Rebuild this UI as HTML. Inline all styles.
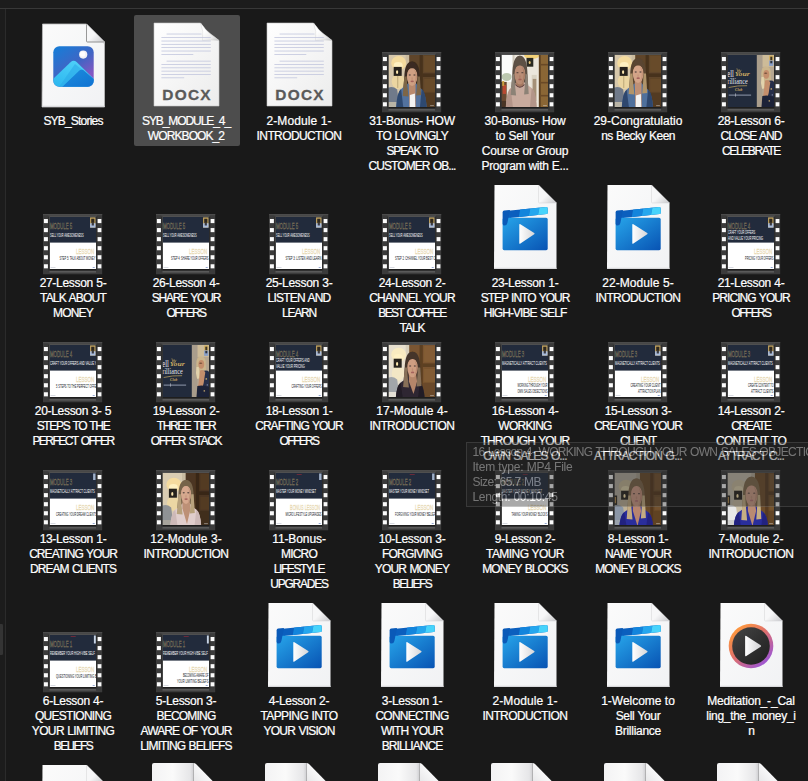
<!DOCTYPE html>
<html lang="en"><head><meta charset="utf-8"><title>Sell Your Brilliance</title>
<style>
html,body{margin:0;padding:0;background:#191919;}
body{width:808px;height:781px;overflow:hidden;position:relative;font-family:"Liberation Sans",sans-serif;}
#root{position:absolute;left:0;top:0;width:808px;height:781px;overflow:hidden;background:#191919;}
.abs{position:absolute;display:block;overflow:visible}
.lbl{position:absolute;width:140px;margin-left:-70px;text-align:center;color:#fff;font-size:12px;line-height:15px;white-space:nowrap;-webkit-text-stroke:0.22px #fff;}
.lbl span{display:block;height:15px}
.topbar{position:absolute;left:0;top:0;width:808px;height:8px;background:#1c1c1c;border-bottom:1px solid #383838}
.leftbar{position:absolute;left:0;top:9px;width:5px;height:772px;background:#1c1c1c;border-right:1px solid #2b2b2b}
.thumbv{position:absolute;left:-1px;top:623.5px;width:3.6px;height:31.5px;background:#343434;border-radius:1.2px}
.sel{position:absolute;background:#4d4d4d;border-radius:2px}
.tip{position:absolute;left:466px;top:442px;width:360px;height:63px;border:1px solid #6a6a6a;background:#2b2b2b;color:#fff;opacity:0.4;font-size:12px;line-height:15px;white-space:nowrap}
.tip span{display:block;height:15px;margin-left:5.5px;position:relative;top:1.5px}
</style></head><body><div id="root">
<svg width="0" height="0" style="position:absolute"><defs><filter id="bl" x="-5%" y="-5%" width="110%" height="110%"><feGaussianBlur stdDeviation="0.42"/></filter></defs></svg>
<div class="topbar"></div><div class="leftbar"></div><div class="thumbv"></div>
<svg class="abs" style="left:40.75px;top:22.5px" width="64.5" height="85" viewBox="-1 -1 64.5 85"><defs><linearGradient id="pg73_23a" x1="0" y1="0" x2="1" y2="1"><stop offset="0" stop-color="#fbfbfb"/><stop offset="1" stop-color="#f1f2f4"/></linearGradient><linearGradient id="pg73_23b" x1="0" y1="0" x2="1" y2="1"><stop offset="0.5" stop-color="#f7f7f8"/><stop offset="1" stop-color="#c9c9cc"/></linearGradient></defs><path d="M0.5 0H44.5L62.5 18V83H0Z" fill="url(#pg73_23a)" stroke="#bdbdbd" stroke-width="0.8"/><path d="M0 82.4H62.5" stroke="#d9d9dc" stroke-width="1.2"/><path d="M44.5 0L62.5 18H45.5Q44.5 18 44.5 17Z" fill="url(#pg73_23b)" stroke="#d2d2d4" stroke-width="0.5"/></svg><svg class="abs" style="left:41.75px;top:23.5px" width="63" height="20" viewBox="0 0 63 20"><path d="M44.5 0.4V17Q44.5 18 45.5 18H62.3" fill="none" stroke="#8f8f8f" stroke-width="0.9"/><path d="M62.2 18V20" stroke="#bdbdbd" stroke-width="0.8"/></svg><svg class="abs" style="left:52.6px;top:45.5px" width="41" height="41" viewBox="0 0 41 41"><defs><linearGradient id="pha" x1="0.2" y1="0" x2="0.9" y2="1"><stop offset="0" stop-color="#1a7bd6"/><stop offset="0.45" stop-color="#4065c4"/><stop offset="0.8" stop-color="#8457c2"/></linearGradient>
<linearGradient id="phb" x1="0" y1="1" x2="0.6" y2="0"><stop offset="0" stop-color="#28b4ee"/><stop offset="1" stop-color="#4fd0f8"/></linearGradient>
<linearGradient id="phc" x1="0" y1="0" x2="1" y2="1"><stop offset="0" stop-color="#1d8fdf"/><stop offset="1" stop-color="#0f6fd0"/></linearGradient>
<clipPath id="phk"><rect x="0.3" y="0.3" width="40.4" height="40.4" rx="6"/></clipPath></defs><g clip-path="url(#phk)"><rect width="41" height="41" fill="url(#pha)"/><path d="M-1 34L17.5 16.2Q20.5 13.6 23.6 16L44 36V43H-1Z" fill="url(#phb)"/><path d="M9 41L26.5 24.2Q28.6 22.6 30.6 24.2L44 36V43H7Z" fill="url(#phc)"/><path d="M9 41L26.5 24.2Q27.5 23.4 28.6 23.3L22 18 6 41Z" fill="#2aa7e8" opacity="0.55"/></g><circle cx="30.2" cy="8.6" r="4.1" fill="#f2f2f4"/><circle cx="29.6" cy="8" r="2.6" fill="#ffffff"/></svg><div class="lbl" style="left:73px;top:113.5px"><span style="letter-spacing:-0.8px">SYB_Stories</span></div>
<div class="sel" style="left:134px;top:15px;width:105.5px;height:131px"></div><svg class="abs" style="left:152.8px;top:22px" width="67" height="86" viewBox="-1 -1 67 86"><defs><linearGradient id="dx186a" x1="0" y1="0" x2="1" y2="1"><stop offset="0" stop-color="#ffffff"/><stop offset="1" stop-color="#ececec"/></linearGradient><linearGradient id="dx186b" x1="0" y1="0" x2="1" y2="1"><stop offset="0.35" stop-color="#ffffff"/><stop offset="0.75" stop-color="#e9e9e9"/><stop offset="1" stop-color="#bcbcbc"/></linearGradient></defs><path d="M0 0H46.5Q50 6 56 10.5 61 14 65 17.5V83H0Z" fill="url(#dx186a)" stroke="#c8c8c8" stroke-width="0.6"/><path d="M46.5 0Q50 4 52 7 56 11.5 65 17.5 58 16.5 48.5 17.5 50 8 46.5 0Z" fill="url(#dx186b)" stroke="#cfcfcf" stroke-width="0.4"/><rect x="12.6" y="10.65" width="34.9" height="0.75" fill="#bfc3dc"/><rect x="7.4" y="14.15" width="49.4" height="0.75" fill="#bfc3dc"/><rect x="7.4" y="17.65" width="49.4" height="0.75" fill="#bfc3dc"/><rect x="7.4" y="20.95" width="49.4" height="0.75" fill="#bfc3dc"/><rect x="7.4" y="24.25" width="49.4" height="0.75" fill="#bfc3dc"/><rect x="7.4" y="27.65" width="49.4" height="0.75" fill="#bfc3dc"/><rect x="7.4" y="31.05" width="31.9" height="0.75" fill="#bfc3dc"/><rect x="12.6" y="37.75" width="44.2" height="0.75" fill="#bfc3dc"/><rect x="7.4" y="41.05" width="49.4" height="0.75" fill="#bfc3dc"/><rect x="7.4" y="44.45" width="49.4" height="0.75" fill="#bfc3dc"/><rect x="7.4" y="47.75" width="49.4" height="0.75" fill="#bfc3dc"/><rect x="7.4" y="51.05" width="49.4" height="0.75" fill="#bfc3dc"/><rect x="7.4" y="54.45" width="22.8" height="0.75" fill="#bfc3dc"/><text x="33.1" y="76.7" text-anchor="middle" font-family="'Liberation Sans',sans-serif" font-weight="bold" font-size="15.4" letter-spacing="1.3" fill="#5a5a5a" stroke="#5a5a5a" stroke-width="0.3">DOCX</text></svg><div class="lbl" style="left:186px;top:113.5px"><span style="letter-spacing:-1.08px">SYB_MODULE_4_</span><span style="letter-spacing:-0.91px">WORKBOOK_2</span></div>
<svg class="abs" style="left:265.8px;top:22px" width="67" height="86" viewBox="-1 -1 67 86"><defs><linearGradient id="dx299a" x1="0" y1="0" x2="1" y2="1"><stop offset="0" stop-color="#ffffff"/><stop offset="1" stop-color="#ececec"/></linearGradient><linearGradient id="dx299b" x1="0" y1="0" x2="1" y2="1"><stop offset="0.35" stop-color="#ffffff"/><stop offset="0.75" stop-color="#e9e9e9"/><stop offset="1" stop-color="#bcbcbc"/></linearGradient></defs><path d="M0 0H46.5Q50 6 56 10.5 61 14 65 17.5V83H0Z" fill="url(#dx299a)" stroke="#c8c8c8" stroke-width="0.6"/><path d="M46.5 0Q50 4 52 7 56 11.5 65 17.5 58 16.5 48.5 17.5 50 8 46.5 0Z" fill="url(#dx299b)" stroke="#cfcfcf" stroke-width="0.4"/><rect x="12.6" y="10.65" width="34.9" height="0.75" fill="#bfc3dc"/><rect x="7.4" y="14.15" width="49.4" height="0.75" fill="#bfc3dc"/><rect x="7.4" y="17.65" width="49.4" height="0.75" fill="#bfc3dc"/><rect x="7.4" y="20.95" width="49.4" height="0.75" fill="#bfc3dc"/><rect x="7.4" y="24.25" width="49.4" height="0.75" fill="#bfc3dc"/><rect x="7.4" y="27.65" width="49.4" height="0.75" fill="#bfc3dc"/><rect x="7.4" y="31.05" width="31.9" height="0.75" fill="#bfc3dc"/><rect x="12.6" y="37.75" width="44.2" height="0.75" fill="#bfc3dc"/><rect x="7.4" y="41.05" width="49.4" height="0.75" fill="#bfc3dc"/><rect x="7.4" y="44.45" width="49.4" height="0.75" fill="#bfc3dc"/><rect x="7.4" y="47.75" width="49.4" height="0.75" fill="#bfc3dc"/><rect x="7.4" y="51.05" width="49.4" height="0.75" fill="#bfc3dc"/><rect x="7.4" y="54.45" width="22.8" height="0.75" fill="#bfc3dc"/><text x="33.1" y="76.7" text-anchor="middle" font-family="'Liberation Sans',sans-serif" font-weight="bold" font-size="15.4" letter-spacing="1.3" fill="#5a5a5a" stroke="#5a5a5a" stroke-width="0.3">DOCX</text></svg><div class="lbl" style="left:299px;top:113.5px"><span style="letter-spacing:0.11px;word-spacing:-0.11px">2-Module 1-</span><span style="letter-spacing:-0.6px">INTRODUCTION</span></div>
<svg class="abs" style="left:382px;top:52px" width="60" height="61" viewBox="0 0 60 61"><rect x="0" y="0" width="59.2" height="60.3" fill="#3b3b3b"/><rect x="0" y="0" width="59.2" height="1.2" fill="#4b4b4b"/><rect x="5.5" y="1.6" width="48.5" height="1.2" fill="#555"/><rect x="6.5" y="57" width="46.5" height="1.6" fill="#5a5a5a"/><rect x="5.2" y="2.5" width="1.3" height="54" fill="#2c2c2c"/><rect x="53" y="2.5" width="1.3" height="54" fill="#2c2c2c"/><rect x="0.9" y="5" width="4" height="4.1" fill="#fbfbfb"/><rect x="54.6" y="5" width="3.8" height="4.1" fill="#fbfbfb"/><rect x="0.9" y="14.05" width="4" height="4.1" fill="#fbfbfb"/><rect x="54.6" y="14.05" width="3.8" height="4.1" fill="#fbfbfb"/><rect x="0.9" y="23.1" width="4" height="4.1" fill="#fbfbfb"/><rect x="54.6" y="23.1" width="3.8" height="4.1" fill="#fbfbfb"/><rect x="0.9" y="32.15" width="4" height="4.1" fill="#fbfbfb"/><rect x="54.6" y="32.15" width="3.8" height="4.1" fill="#fbfbfb"/><rect x="0.9" y="41.2" width="4" height="4.1" fill="#fbfbfb"/><rect x="54.6" y="41.2" width="3.8" height="4.1" fill="#fbfbfb"/><rect x="0.9" y="50.25" width="4" height="4.1" fill="#fbfbfb"/><rect x="54.6" y="50.25" width="3.8" height="4.1" fill="#fbfbfb"/><svg x="6.7" y="2.9" width="46.3" height="52.2" viewBox="0 0 46.3 52.2" preserveAspectRatio="none"><g filter="url(#bl)"><rect x="-3" y="-3" width="52" height="58" fill="#5e4429"/><rect x="30.9" y="-3" width="3.2" height="58" fill="#47321d"/><rect x="33.9" y="18.5" width="20" height="3.6" fill="#47321d"/><rect x="35.4" y="1" width="12" height="16" fill="#71532f" opacity="0.55"/><rect x="35.4" y="24" width="12" height="13" fill="#71532f" opacity="0.5"/><rect x="34.4" y="38" width="14" height="16" fill="#47321d" opacity="0.5"/><rect x="-3" y="-3" width="23.4" height="58" fill="#d6c7ab"/><rect x="17.0" y="-3" width="3.4" height="40" fill="#cbbb9e"/><ellipse cx="10" cy="8.100000000000001" rx="7.5" ry="7" fill="#f7dd9c" opacity="0.9"/><ellipse cx="9.5" cy="10.600000000000001" rx="4.5" ry="3.4" fill="#fff2c4" opacity="0.9"/><ellipse cx="9.5" cy="26.6" rx="6.5" ry="7.5" fill="#f7dd9c" opacity="0.63"/><rect x="5" y="12.000000000000002" width="8" height="9" fill="#27231e"/><ellipse cx="8.4" cy="17.200000000000003" rx="1.1" ry="1.9" fill="#ffe9b0"/><rect x="8.7" y="21.0" width="0.8" height="12" fill="#9a8458" opacity="0.7"/><path d="M-3 34Q3 30 8.5 34.5L11 55H-3Z" fill="#6f7a8a"/><path d="M-3 47H9L10 55H-3Z" fill="#b9b4a6"/><path d="M15.6 22.6Q15.9 6.6 23.4 6.6Q30.9 6.6 31.2 22.6L32.4 41Q23.4 44 14 41Z" fill="#3b2c20"/><path d="M7.4 55Q8 35 15.4 32L20.4 27.5 26.9 27.5 30 32Q37.4 35 38 55Z" fill="#52729e"/><path d="M7.4 55Q8 37 12.4 34L14.9 55Z" fill="#2f4870"/><path d="M38 55Q37.4 37 33 34L31 55Z" fill="#2f4870"/><path d="M20 28.2H26.8L27 55H20.8Z" fill="#b98a6e"/><path d="M21.2 40L26.2 38.5 26.6 55H21Z" fill="#f3f3f3"/><path d="M15.6 21.6L14 41 19.8 41.6 18.4 29.2 18 21.6Z" fill="#7d6546"/><path d="M31.2 21.6L32.4 40 27.4 40.6 28.4 29.2 28.8 21.6Z" fill="#7d6546"/><ellipse cx="23.4" cy="21.6" rx="5.2" ry="9.6" fill="#cfa083"/><path d="M25.22 13.92Q28.86 21.6 24.96 30.72Q31.72 21.6 25.22 13.92Z" fill="#b98a6e" opacity="0.8"/><path d="M17.6 19.2Q17.8 6.6 23.4 6.6Q29 6.6 29.2 19.2Q27.04 12.96 23.4 13.34Q19.76 12.96 17.6 19.2Z" fill="#3b2c20"/><ellipse cx="21.06" cy="20.06" rx="1.1" ry="0.7" fill="#3e3230" opacity="0.75"/><ellipse cx="25.74" cy="20.06" rx="1.1" ry="0.7" fill="#3e3230" opacity="0.75"/><ellipse cx="23.5" cy="26.4" rx="1.7" ry="0.9" fill="#9a5452" opacity="0.8"/><ellipse cx="23.4" cy="23.71" rx="0.7" ry="1.6" fill="#b98a6e" opacity="0.6"/></g><rect x="41.4" y="50.4" width="3.8" height="0.8" fill="#e0e0e0" opacity="0.6"/></svg><rect x="6.7" y="55.1" width="46.3" height="1.2" fill="#1c1c1c"/></svg><div class="lbl" style="left:412px;top:113.5px"><span style="letter-spacing:-0.2px;word-spacing:0.2px">31-Bonus- HOW</span><span style="letter-spacing:-0.69px;word-spacing:0.69px">TO LOVINGLY</span><span style="letter-spacing:-1.26px;word-spacing:1.26px">SPEAK TO</span><span style="letter-spacing:-0.94px;word-spacing:0.94px">CUSTOMER OB...</span></div>
<svg class="abs" style="left:495px;top:52px" width="60" height="61" viewBox="0 0 60 61"><rect x="0" y="0" width="59.2" height="60.3" fill="#3b3b3b"/><rect x="0" y="0" width="59.2" height="1.2" fill="#4b4b4b"/><rect x="5.5" y="1.6" width="48.5" height="1.2" fill="#555"/><rect x="6.5" y="57" width="46.5" height="1.6" fill="#5a5a5a"/><rect x="5.2" y="2.5" width="1.3" height="54" fill="#2c2c2c"/><rect x="53" y="2.5" width="1.3" height="54" fill="#2c2c2c"/><rect x="0.9" y="5" width="4" height="4.1" fill="#fbfbfb"/><rect x="54.6" y="5" width="3.8" height="4.1" fill="#fbfbfb"/><rect x="0.9" y="14.05" width="4" height="4.1" fill="#fbfbfb"/><rect x="54.6" y="14.05" width="3.8" height="4.1" fill="#fbfbfb"/><rect x="0.9" y="23.1" width="4" height="4.1" fill="#fbfbfb"/><rect x="54.6" y="23.1" width="3.8" height="4.1" fill="#fbfbfb"/><rect x="0.9" y="32.15" width="4" height="4.1" fill="#fbfbfb"/><rect x="54.6" y="32.15" width="3.8" height="4.1" fill="#fbfbfb"/><rect x="0.9" y="41.2" width="4" height="4.1" fill="#fbfbfb"/><rect x="54.6" y="41.2" width="3.8" height="4.1" fill="#fbfbfb"/><rect x="0.9" y="50.25" width="4" height="4.1" fill="#fbfbfb"/><rect x="54.6" y="50.25" width="3.8" height="4.1" fill="#fbfbfb"/><svg x="6.7" y="2.9" width="46.3" height="52.2" viewBox="0 0 46.3 52.2" preserveAspectRatio="none"><g filter="url(#bl)"><rect x="-3" y="-3" width="52" height="58" fill="#ebe6dc"/><rect x="-3" y="-3" width="14.5" height="30" fill="#fbfcfb"/><rect x="10.8" y="-3" width="2" height="58" fill="#cfc8ba"/><ellipse cx="5" cy="22" rx="5" ry="4" fill="#9fb08e" opacity="0.7"/><rect x="-3" y="27" width="8" height="28" fill="#6a4a30"/><rect x="1" y="30" width="3.4" height="9" fill="#b84a32"/><rect x="0.5" y="26" width="2" height="5" fill="#c8a040"/><rect x="-3" y="46" width="9" height="9" fill="#4a3426"/><ellipse cx="30" cy="0.6" rx="7.5" ry="3.6" fill="#f2cf70" opacity="0.95"/><rect x="24.8" y="3" width="6.8" height="8.8" fill="#2c2a22"/><ellipse cx="28" cy="7.6" rx="1" ry="1.6" fill="#e8c878"/><rect x="30" y="20" width="5" height="35" fill="#d9d2c2"/><rect x="37.2" y="-3" width="12" height="58" fill="#8a6634"/><rect x="37.2" y="-3" width="1.8" height="58" fill="#5e4222"/><rect x="39" y="9" width="10" height="1.6" fill="#6a4a26"/><rect x="39" y="27" width="10" height="1.6" fill="#6a4a26"/><rect x="39" y="40" width="10" height="1.6" fill="#6a4a26"/><rect x="31" y="24" width="3.6" height="22" fill="#7a5a3a" opacity="0.55"/><path d="M10.6 20.4Q10.9 0.8 18.2 0.8Q25.5 0.8 25.8 20.4L27 40Q18.2 43 9 40Z" fill="#5d5145"/><path d="M4 55Q4.6 34 12 31L15.2 26.5 21.7 26.5 27 31Q34.4 34 35 55Z" fill="#c8ab9e"/><path d="M4 55Q4.6 36 9 33L11.5 55Z" fill="#b39589"/><path d="M35 55Q34.4 36 30 33L28 55Z" fill="#b39589"/><path d="M14.4 25.6H22V30.5Q18.2 34 14.4 30.5Z" fill="#a3775f"/><path d="M13.6 29.6Q18.2 35 22.8 29.6" stroke="#5e4040" stroke-width="1.1" fill="none"/><path d="M10.6 19.4L9 40 14.4 40.6 13 27.6 12.6 19.4Z" fill="#8c8276"/><path d="M25.8 19.4L27 39 22.4 39.6 23.4 27.6 23.8 19.4Z" fill="#8c8276"/><ellipse cx="18.2" cy="19.4" rx="5.4" ry="10.2" fill="#b98c74"/><path d="M20.09 11.24Q23.87 19.4 19.82 29.09Q26.84 19.4 20.09 11.24Z" fill="#a3775f" opacity="0.8"/><path d="M12.2 16.85Q12.4 0.8 18.2 0.8Q24 0.8 24.2 16.85Q21.98 10.22 18.2 10.63Q14.42 10.22 12.2 16.85Z" fill="#5d5145"/><ellipse cx="15.77" cy="17.77" rx="1.1" ry="0.7" fill="#3e3230" opacity="0.75"/><ellipse cx="20.63" cy="17.77" rx="1.1" ry="0.7" fill="#3e3230" opacity="0.75"/><ellipse cx="18.3" cy="24.5" rx="1.7" ry="0.9" fill="#9a5452" opacity="0.8"/><ellipse cx="18.2" cy="21.64" rx="0.7" ry="1.6" fill="#a3775f" opacity="0.6"/></g><rect x="41.4" y="50.4" width="3.8" height="0.8" fill="#e0e0e0" opacity="0.6"/></svg><rect x="6.7" y="55.1" width="46.3" height="1.2" fill="#1c1c1c"/></svg><div class="lbl" style="left:525px;top:113.5px"><span style="letter-spacing:-0.13px;word-spacing:0.13px">30-Bonus- How</span><span style="letter-spacing:-0.17px;word-spacing:0.17px">to Sell Your</span><span style="letter-spacing:-0.23px;word-spacing:0.23px">Course or Group</span><span style="letter-spacing:-0.34px;word-spacing:0.34px">Program with E...</span></div>
<svg class="abs" style="left:608px;top:52px" width="60" height="61" viewBox="0 0 60 61"><rect x="0" y="0" width="59.2" height="60.3" fill="#3b3b3b"/><rect x="0" y="0" width="59.2" height="1.2" fill="#4b4b4b"/><rect x="5.5" y="1.6" width="48.5" height="1.2" fill="#555"/><rect x="6.5" y="57" width="46.5" height="1.6" fill="#5a5a5a"/><rect x="5.2" y="2.5" width="1.3" height="54" fill="#2c2c2c"/><rect x="53" y="2.5" width="1.3" height="54" fill="#2c2c2c"/><rect x="0.9" y="5" width="4" height="4.1" fill="#fbfbfb"/><rect x="54.6" y="5" width="3.8" height="4.1" fill="#fbfbfb"/><rect x="0.9" y="14.05" width="4" height="4.1" fill="#fbfbfb"/><rect x="54.6" y="14.05" width="3.8" height="4.1" fill="#fbfbfb"/><rect x="0.9" y="23.1" width="4" height="4.1" fill="#fbfbfb"/><rect x="54.6" y="23.1" width="3.8" height="4.1" fill="#fbfbfb"/><rect x="0.9" y="32.15" width="4" height="4.1" fill="#fbfbfb"/><rect x="54.6" y="32.15" width="3.8" height="4.1" fill="#fbfbfb"/><rect x="0.9" y="41.2" width="4" height="4.1" fill="#fbfbfb"/><rect x="54.6" y="41.2" width="3.8" height="4.1" fill="#fbfbfb"/><rect x="0.9" y="50.25" width="4" height="4.1" fill="#fbfbfb"/><rect x="54.6" y="50.25" width="3.8" height="4.1" fill="#fbfbfb"/><svg x="6.7" y="2.9" width="46.3" height="52.2" viewBox="0 0 46.3 52.2" preserveAspectRatio="none"><g filter="url(#bl)"><rect x="-3" y="-3" width="52" height="58" fill="#5e4429"/><rect x="30.9" y="-3" width="3.2" height="58" fill="#47321d"/><rect x="33.9" y="18.5" width="20" height="3.6" fill="#47321d"/><rect x="35.4" y="1" width="12" height="16" fill="#71532f" opacity="0.55"/><rect x="35.4" y="24" width="12" height="13" fill="#71532f" opacity="0.5"/><rect x="34.4" y="38" width="14" height="16" fill="#47321d" opacity="0.5"/><rect x="-3" y="-3" width="23.4" height="58" fill="#d6c7ab"/><rect x="17.0" y="-3" width="3.4" height="40" fill="#cbbb9e"/><ellipse cx="10" cy="8.100000000000001" rx="7.5" ry="7" fill="#f7dd9c" opacity="0.9"/><ellipse cx="9.5" cy="10.600000000000001" rx="4.5" ry="3.4" fill="#fff2c4" opacity="0.9"/><ellipse cx="9.5" cy="26.6" rx="6.5" ry="7.5" fill="#f7dd9c" opacity="0.63"/><rect x="5" y="12.000000000000002" width="8" height="9" fill="#27231e"/><ellipse cx="8.4" cy="17.200000000000003" rx="1.1" ry="1.9" fill="#ffe9b0"/><rect x="8.7" y="21.0" width="0.8" height="12" fill="#9a8458" opacity="0.7"/><path d="M-3 34Q3 30 8.5 34.5L11 55H-3Z" fill="#6f7a8a"/><path d="M-3 47H9L10 55H-3Z" fill="#b9b4a6"/><path d="M15.5 19.6Q15.8 3.4 23.4 3.4Q31 3.4 31.3 19.6L32.5 39Q23.4 42 13.9 39Z" fill="#5a4530"/><path d="M7 55Q7.6 35.5 15 32.5L20.4 28 26.9 28 30.4 32.5Q37.8 35.5 38.4 55Z" fill="#50709c"/><path d="M7 55Q7.6 37.5 12 34.5L14.5 55Z" fill="#2e466e"/><path d="M38.4 55Q37.8 37.5 33.4 34.5L31.4 55Z" fill="#2e466e"/><path d="M20 25H26.8L27 55H20.8Z" fill="#bf9074"/><path d="M21.2 40.5L26.2 39 26.6 55H21Z" fill="#f3f3f3"/><path d="M15.5 18.6L13.9 39 19.7 39.6 18.3 26 17.9 18.6Z" fill="#b0946a"/><path d="M31.3 18.6L32.5 38 27.5 38.6 28.5 26 28.9 18.6Z" fill="#b0946a"/><ellipse cx="23.4" cy="18.6" rx="5.3" ry="9.4" fill="#d4a488"/><path d="M25.25 11.08Q28.96 18.6 24.99 27.53Q31.88 18.6 25.25 11.08Z" fill="#bf9074" opacity="0.8"/><path d="M17.5 16.25Q17.7 3.4 23.4 3.4Q29.1 3.4 29.3 16.25Q27.11 10.14 23.4 10.52Q19.69 10.14 17.5 16.25Z" fill="#5a4530"/><ellipse cx="21.02" cy="17.1" rx="1.1" ry="0.7" fill="#3e3230" opacity="0.75"/><ellipse cx="25.78" cy="17.1" rx="1.1" ry="0.7" fill="#3e3230" opacity="0.75"/><ellipse cx="23.5" cy="23.3" rx="1.7" ry="0.9" fill="#9a5452" opacity="0.8"/><ellipse cx="23.4" cy="20.67" rx="0.7" ry="1.6" fill="#bf9074" opacity="0.6"/></g><rect x="41.4" y="50.4" width="3.8" height="0.8" fill="#e0e0e0" opacity="0.6"/></svg><rect x="6.7" y="55.1" width="46.3" height="1.2" fill="#1c1c1c"/></svg><div class="lbl" style="left:638px;top:113.5px"><span style="letter-spacing:0px">29-Congratulatio</span><span style="letter-spacing:-0.58px;word-spacing:0.58px">ns Becky Keen</span></div>
<svg class="abs" style="left:721px;top:52px" width="60" height="61" viewBox="0 0 60 61"><rect x="0" y="0" width="59.2" height="60.3" fill="#3b3b3b"/><rect x="0" y="0" width="59.2" height="1.2" fill="#4b4b4b"/><rect x="5.5" y="1.6" width="48.5" height="1.2" fill="#555"/><rect x="6.5" y="57" width="46.5" height="1.6" fill="#5a5a5a"/><rect x="5.2" y="2.5" width="1.3" height="54" fill="#2c2c2c"/><rect x="53" y="2.5" width="1.3" height="54" fill="#2c2c2c"/><rect x="0.9" y="5" width="4" height="4.1" fill="#fbfbfb"/><rect x="54.6" y="5" width="3.8" height="4.1" fill="#fbfbfb"/><rect x="0.9" y="14.05" width="4" height="4.1" fill="#fbfbfb"/><rect x="54.6" y="14.05" width="3.8" height="4.1" fill="#fbfbfb"/><rect x="0.9" y="23.1" width="4" height="4.1" fill="#fbfbfb"/><rect x="54.6" y="23.1" width="3.8" height="4.1" fill="#fbfbfb"/><rect x="0.9" y="32.15" width="4" height="4.1" fill="#fbfbfb"/><rect x="54.6" y="32.15" width="3.8" height="4.1" fill="#fbfbfb"/><rect x="0.9" y="41.2" width="4" height="4.1" fill="#fbfbfb"/><rect x="54.6" y="41.2" width="3.8" height="4.1" fill="#fbfbfb"/><rect x="0.9" y="50.25" width="4" height="4.1" fill="#fbfbfb"/><rect x="54.6" y="50.25" width="3.8" height="4.1" fill="#fbfbfb"/><svg x="6.7" y="2.9" width="46.3" height="52.2" viewBox="0 0 46.3 52.2" preserveAspectRatio="none"><rect width="46.3" height="52.2" fill="#222b3c"/><rect x="29.2" y="0" width="17.1" height="52.2" fill="#b6a791"/><g filter="url(#bl)"><rect x="29.2" y="-2" width="5.4" height="56" fill="#a99d8c"/><rect x="35" y="-2" width="12" height="14" fill="#cdbb98"/><path d="M33.6 20Q33 11.5 38.4 11.5 43.4 11.5 43 19L43.6 31 39 35 34 33Z" fill="#cbb58c"/><path d="M33.8 22Q32.4 28 34.6 34L37 33 36 22Z" fill="#e2d2ac"/><ellipse cx="38.6" cy="19.4" rx="2.9" ry="4.4" fill="#c48e6c"/><ellipse cx="38" cy="18.4" rx="1.6" ry="0.7" fill="#5a3a2c" opacity="0.7"/><path d="M40 26Q47 24 47.5 30V55H37L38 42Z" fill="#262d48"/><path d="M37.4 25.6Q40.6 24 42.6 27.4L41 38Q39.4 45 35.4 49L34 46Q36.4 38 36.6 32Z" fill="#c48e6c"/><path d="M34.6 41Q40 39.6 46.5 42V55H33.6Z" fill="#1f2438"/><circle cx="43.6" cy="34" r="0.9" fill="#b09a6a"/><circle cx="41.6" cy="46" r="0.8" fill="#b09a6a"/><circle cx="44.6" cy="40" r="0.7" fill="#8a93b0"/></g><rect x="41.4" y="0.6" width="4.3" height="5" fill="#d2b060"/><rect x="41.4" y="5.6" width="4.3" height="5.4" fill="#8aa0c8"/><rect x="42.6" y="1.8" width="2" height="3.4" fill="#3a3428"/><rect x="42.6" y="6" width="2" height="2.4" fill="#30343c"/><text x="-0.4" y="21.8" font-family="'Liberation Serif',serif" font-size="9.6" fill="#e4e4ec" textLength="6.6" lengthAdjust="spacingAndGlyphs">ell</text><text x="7" y="21.6" font-family="'Liberation Serif',serif" font-size="6.4" font-style="italic" font-weight="bold" fill="#c9aa62" textLength="15" lengthAdjust="spacingAndGlyphs">Your</text><text x="-0.4" y="29.4" font-family="'Liberation Serif',serif" font-size="9" fill="#e4e4ec" textLength="20.4" lengthAdjust="spacingAndGlyphs">rilliance</text><path d="M1 32.6Q10 30.4 19.4 30.8" stroke="#c9aa62" stroke-width="0.7" fill="none"/><text x="7.4" y="36.6" font-family="'Liberation Serif',serif" font-size="3.6" font-style="italic" font-weight="bold" fill="#c9aa62">Club</text><rect x="1" y="39.7" width="22.4" height="1" fill="#9098ac"/><rect x="7.3" y="38.4" width="0.5" height="3.4" fill="#d0d4e0"/><path d="M9.2 13.4L10.2 17 11.4 14.6 12.4 17.4 13.4 15" stroke="#c9aa62" stroke-width="0.55" fill="none"/></svg><rect x="6.7" y="55.1" width="46.3" height="1.2" fill="#1c1c1c"/></svg><div class="lbl" style="left:751px;top:113.5px"><span style="letter-spacing:-0.3px;word-spacing:0.3px">28-Lesson 6-</span><span style="letter-spacing:-0.98px;word-spacing:0.98px">CLOSE AND</span><span style="letter-spacing:-1.4px">CELEBRATE</span></div>
<svg class="abs" style="left:43px;top:214px" width="60" height="61" viewBox="0 0 60 61"><rect x="0" y="0" width="59.2" height="60.3" fill="#3b3b3b"/><rect x="0" y="0" width="59.2" height="1.2" fill="#4b4b4b"/><rect x="5.5" y="1.6" width="48.5" height="1.2" fill="#555"/><rect x="6.5" y="57" width="46.5" height="1.6" fill="#5a5a5a"/><rect x="5.2" y="2.5" width="1.3" height="54" fill="#2c2c2c"/><rect x="53" y="2.5" width="1.3" height="54" fill="#2c2c2c"/><rect x="0.9" y="5" width="4" height="4.1" fill="#fbfbfb"/><rect x="54.6" y="5" width="3.8" height="4.1" fill="#fbfbfb"/><rect x="0.9" y="14.05" width="4" height="4.1" fill="#fbfbfb"/><rect x="54.6" y="14.05" width="3.8" height="4.1" fill="#fbfbfb"/><rect x="0.9" y="23.1" width="4" height="4.1" fill="#fbfbfb"/><rect x="54.6" y="23.1" width="3.8" height="4.1" fill="#fbfbfb"/><rect x="0.9" y="32.15" width="4" height="4.1" fill="#fbfbfb"/><rect x="54.6" y="32.15" width="3.8" height="4.1" fill="#fbfbfb"/><rect x="0.9" y="41.2" width="4" height="4.1" fill="#fbfbfb"/><rect x="54.6" y="41.2" width="3.8" height="4.1" fill="#fbfbfb"/><rect x="0.9" y="50.25" width="4" height="4.1" fill="#fbfbfb"/><rect x="54.6" y="50.25" width="3.8" height="4.1" fill="#fbfbfb"/><svg x="6.7" y="2.9" width="46.3" height="52.2" viewBox="0 0 46.3 52.2" preserveAspectRatio="none"><rect width="46.3" height="52.2" fill="#fff"/><rect width="46.3" height="25.7" fill="#222b3c"/><text x="0.2" y="12.2" font-family="'Liberation Sans',sans-serif" font-size="8.2" fill="#a8966c" fill-opacity="0.1" stroke="#9c8a62" stroke-width="0.33" textLength="22.4" lengthAdjust="spacingAndGlyphs">MODULE 5</text><text x="0.3" y="19.9" font-family="'Liberation Sans',sans-serif" font-size="4.8" fill="#ffffff" textLength="33.6" lengthAdjust="spacingAndGlyphs">SELL YOUR AWESOMENESS</text><text x="44.4" y="36.9" text-anchor="end" font-family="'Liberation Sans',sans-serif" font-size="7.6" fill="#eadcb8" fill-opacity="0.3" stroke="#e6d6ae" stroke-width="0.42" textLength="18" lengthAdjust="spacingAndGlyphs">LESSON</text><text x="45.8" y="43.4" text-anchor="end" font-family="'Liberation Sans',sans-serif" font-size="4.7" fill="#10141c" textLength="36" lengthAdjust="spacingAndGlyphs">STEP 5: TALK ABOUT MONEY</text><rect x="40.4" y="0.5" width="5.4" height="10.2" fill="#c9a860"/><rect x="41.5" y="1.8" width="3.2" height="4.2" fill="#2e2820"/><rect x="40.4" y="6.4" width="5.4" height="4.3" fill="#a9bcdc"/><rect x="42" y="6" width="2.2" height="2.6" fill="#3a3a40"/><rect x="0.8" y="50.4" width="5" height="0.7" fill="#c8ccd6"/><rect x="43" y="50.2" width="2" height="0.9" fill="#8aa0d0"/></svg><rect x="6.7" y="55.1" width="46.3" height="1.2" fill="#1c1c1c"/></svg><div class="lbl" style="left:73px;top:275.5px"><span style="letter-spacing:-0.3px;word-spacing:0.3px">27-Lesson 5-</span><span style="letter-spacing:-0.8px;word-spacing:0.8px">TALK ABOUT</span><span style="letter-spacing:-0.8px">MONEY</span></div>
<svg class="abs" style="left:156px;top:214px" width="60" height="61" viewBox="0 0 60 61"><rect x="0" y="0" width="59.2" height="60.3" fill="#3b3b3b"/><rect x="0" y="0" width="59.2" height="1.2" fill="#4b4b4b"/><rect x="5.5" y="1.6" width="48.5" height="1.2" fill="#555"/><rect x="6.5" y="57" width="46.5" height="1.6" fill="#5a5a5a"/><rect x="5.2" y="2.5" width="1.3" height="54" fill="#2c2c2c"/><rect x="53" y="2.5" width="1.3" height="54" fill="#2c2c2c"/><rect x="0.9" y="5" width="4" height="4.1" fill="#fbfbfb"/><rect x="54.6" y="5" width="3.8" height="4.1" fill="#fbfbfb"/><rect x="0.9" y="14.05" width="4" height="4.1" fill="#fbfbfb"/><rect x="54.6" y="14.05" width="3.8" height="4.1" fill="#fbfbfb"/><rect x="0.9" y="23.1" width="4" height="4.1" fill="#fbfbfb"/><rect x="54.6" y="23.1" width="3.8" height="4.1" fill="#fbfbfb"/><rect x="0.9" y="32.15" width="4" height="4.1" fill="#fbfbfb"/><rect x="54.6" y="32.15" width="3.8" height="4.1" fill="#fbfbfb"/><rect x="0.9" y="41.2" width="4" height="4.1" fill="#fbfbfb"/><rect x="54.6" y="41.2" width="3.8" height="4.1" fill="#fbfbfb"/><rect x="0.9" y="50.25" width="4" height="4.1" fill="#fbfbfb"/><rect x="54.6" y="50.25" width="3.8" height="4.1" fill="#fbfbfb"/><svg x="6.7" y="2.9" width="46.3" height="52.2" viewBox="0 0 46.3 52.2" preserveAspectRatio="none"><rect width="46.3" height="52.2" fill="#fff"/><rect width="46.3" height="25.7" fill="#222b3c"/><text x="0.2" y="12.2" font-family="'Liberation Sans',sans-serif" font-size="8.2" fill="#a8966c" fill-opacity="0.1" stroke="#9c8a62" stroke-width="0.33" textLength="22.4" lengthAdjust="spacingAndGlyphs">MODULE 5</text><text x="0.3" y="19.9" font-family="'Liberation Sans',sans-serif" font-size="4.8" fill="#ffffff" textLength="33.6" lengthAdjust="spacingAndGlyphs">SELL YOUR AWESOMENESS</text><text x="44.4" y="36.9" text-anchor="end" font-family="'Liberation Sans',sans-serif" font-size="7.6" fill="#eadcb8" fill-opacity="0.3" stroke="#e6d6ae" stroke-width="0.42" textLength="18" lengthAdjust="spacingAndGlyphs">LESSON</text><text x="45.8" y="43.4" text-anchor="end" font-family="'Liberation Sans',sans-serif" font-size="4.7" fill="#10141c" textLength="37.5" lengthAdjust="spacingAndGlyphs">STEP 4: SHARE YOUR OFFERS</text><rect x="40.4" y="0.5" width="5.4" height="10.2" fill="#c9a860"/><rect x="41.5" y="1.8" width="3.2" height="4.2" fill="#2e2820"/><rect x="40.4" y="6.4" width="5.4" height="4.3" fill="#a9bcdc"/><rect x="42" y="6" width="2.2" height="2.6" fill="#3a3a40"/><rect x="0.8" y="50.4" width="5" height="0.7" fill="#c8ccd6"/><rect x="43" y="50.2" width="2" height="0.9" fill="#8aa0d0"/></svg><rect x="6.7" y="55.1" width="46.3" height="1.2" fill="#1c1c1c"/></svg><div class="lbl" style="left:186px;top:275.5px"><span style="letter-spacing:-0.3px;word-spacing:0.3px">26-Lesson 4-</span><span style="letter-spacing:-1.18px;word-spacing:1.18px">SHARE YOUR</span><span style="letter-spacing:-1.63px">OFFERS</span></div>
<svg class="abs" style="left:269px;top:214px" width="60" height="61" viewBox="0 0 60 61"><rect x="0" y="0" width="59.2" height="60.3" fill="#3b3b3b"/><rect x="0" y="0" width="59.2" height="1.2" fill="#4b4b4b"/><rect x="5.5" y="1.6" width="48.5" height="1.2" fill="#555"/><rect x="6.5" y="57" width="46.5" height="1.6" fill="#5a5a5a"/><rect x="5.2" y="2.5" width="1.3" height="54" fill="#2c2c2c"/><rect x="53" y="2.5" width="1.3" height="54" fill="#2c2c2c"/><rect x="0.9" y="5" width="4" height="4.1" fill="#fbfbfb"/><rect x="54.6" y="5" width="3.8" height="4.1" fill="#fbfbfb"/><rect x="0.9" y="14.05" width="4" height="4.1" fill="#fbfbfb"/><rect x="54.6" y="14.05" width="3.8" height="4.1" fill="#fbfbfb"/><rect x="0.9" y="23.1" width="4" height="4.1" fill="#fbfbfb"/><rect x="54.6" y="23.1" width="3.8" height="4.1" fill="#fbfbfb"/><rect x="0.9" y="32.15" width="4" height="4.1" fill="#fbfbfb"/><rect x="54.6" y="32.15" width="3.8" height="4.1" fill="#fbfbfb"/><rect x="0.9" y="41.2" width="4" height="4.1" fill="#fbfbfb"/><rect x="54.6" y="41.2" width="3.8" height="4.1" fill="#fbfbfb"/><rect x="0.9" y="50.25" width="4" height="4.1" fill="#fbfbfb"/><rect x="54.6" y="50.25" width="3.8" height="4.1" fill="#fbfbfb"/><svg x="6.7" y="2.9" width="46.3" height="52.2" viewBox="0 0 46.3 52.2" preserveAspectRatio="none"><rect width="46.3" height="52.2" fill="#fff"/><rect width="46.3" height="25.7" fill="#222b3c"/><text x="0.2" y="12.2" font-family="'Liberation Sans',sans-serif" font-size="8.2" fill="#a8966c" fill-opacity="0.1" stroke="#9c8a62" stroke-width="0.33" textLength="22.4" lengthAdjust="spacingAndGlyphs">MODULE 5</text><text x="0.3" y="19.9" font-family="'Liberation Sans',sans-serif" font-size="4.8" fill="#ffffff" textLength="33.6" lengthAdjust="spacingAndGlyphs">SELL YOUR AWESOMENESS</text><text x="44.4" y="36.9" text-anchor="end" font-family="'Liberation Sans',sans-serif" font-size="7.6" fill="#eadcb8" fill-opacity="0.3" stroke="#e6d6ae" stroke-width="0.42" textLength="18" lengthAdjust="spacingAndGlyphs">LESSON</text><text x="45.8" y="43.4" text-anchor="end" font-family="'Liberation Sans',sans-serif" font-size="4.7" fill="#10141c" textLength="36" lengthAdjust="spacingAndGlyphs">STEP 3: LISTEN AND LEARN</text><rect x="40.4" y="0.5" width="5.4" height="10.2" fill="#c9a860"/><rect x="41.5" y="1.8" width="3.2" height="4.2" fill="#2e2820"/><rect x="40.4" y="6.4" width="5.4" height="4.3" fill="#a9bcdc"/><rect x="42" y="6" width="2.2" height="2.6" fill="#3a3a40"/><rect x="0.8" y="50.4" width="5" height="0.7" fill="#c8ccd6"/><rect x="43" y="50.2" width="2" height="0.9" fill="#8aa0d0"/></svg><rect x="6.7" y="55.1" width="46.3" height="1.2" fill="#1c1c1c"/></svg><div class="lbl" style="left:299px;top:275.5px"><span style="letter-spacing:-0.3px;word-spacing:0.3px">25-Lesson 3-</span><span style="letter-spacing:-0.8px;word-spacing:0.8px">LISTEN AND</span><span style="letter-spacing:-1.18px">LEARN</span></div>
<svg class="abs" style="left:382px;top:214px" width="60" height="61" viewBox="0 0 60 61"><rect x="0" y="0" width="59.2" height="60.3" fill="#3b3b3b"/><rect x="0" y="0" width="59.2" height="1.2" fill="#4b4b4b"/><rect x="5.5" y="1.6" width="48.5" height="1.2" fill="#555"/><rect x="6.5" y="57" width="46.5" height="1.6" fill="#5a5a5a"/><rect x="5.2" y="2.5" width="1.3" height="54" fill="#2c2c2c"/><rect x="53" y="2.5" width="1.3" height="54" fill="#2c2c2c"/><rect x="0.9" y="5" width="4" height="4.1" fill="#fbfbfb"/><rect x="54.6" y="5" width="3.8" height="4.1" fill="#fbfbfb"/><rect x="0.9" y="14.05" width="4" height="4.1" fill="#fbfbfb"/><rect x="54.6" y="14.05" width="3.8" height="4.1" fill="#fbfbfb"/><rect x="0.9" y="23.1" width="4" height="4.1" fill="#fbfbfb"/><rect x="54.6" y="23.1" width="3.8" height="4.1" fill="#fbfbfb"/><rect x="0.9" y="32.15" width="4" height="4.1" fill="#fbfbfb"/><rect x="54.6" y="32.15" width="3.8" height="4.1" fill="#fbfbfb"/><rect x="0.9" y="41.2" width="4" height="4.1" fill="#fbfbfb"/><rect x="54.6" y="41.2" width="3.8" height="4.1" fill="#fbfbfb"/><rect x="0.9" y="50.25" width="4" height="4.1" fill="#fbfbfb"/><rect x="54.6" y="50.25" width="3.8" height="4.1" fill="#fbfbfb"/><svg x="6.7" y="2.9" width="46.3" height="52.2" viewBox="0 0 46.3 52.2" preserveAspectRatio="none"><rect width="46.3" height="52.2" fill="#fff"/><rect width="46.3" height="25.7" fill="#222b3c"/><text x="0.2" y="12.2" font-family="'Liberation Sans',sans-serif" font-size="8.2" fill="#a8966c" fill-opacity="0.1" stroke="#9c8a62" stroke-width="0.33" textLength="22.4" lengthAdjust="spacingAndGlyphs">MODULE 5</text><text x="0.3" y="19.9" font-family="'Liberation Sans',sans-serif" font-size="4.8" fill="#ffffff" textLength="33.6" lengthAdjust="spacingAndGlyphs">SELL YOUR AWESOMENESS</text><text x="44.4" y="36.9" text-anchor="end" font-family="'Liberation Sans',sans-serif" font-size="7.6" fill="#eadcb8" fill-opacity="0.3" stroke="#e6d6ae" stroke-width="0.42" textLength="18" lengthAdjust="spacingAndGlyphs">LESSON</text><text x="6.4" y="43.4" font-family="'Liberation Sans',sans-serif" font-size="4.7" fill="#10141c" textLength="55.5" lengthAdjust="spacingAndGlyphs">STEP 2: CHANNEL YOUR BEST COFFEE TALK</text><rect x="40.4" y="0.5" width="5.4" height="10.2" fill="#c9a860"/><rect x="41.5" y="1.8" width="3.2" height="4.2" fill="#2e2820"/><rect x="40.4" y="6.4" width="5.4" height="4.3" fill="#a9bcdc"/><rect x="42" y="6" width="2.2" height="2.6" fill="#3a3a40"/><rect x="0.8" y="50.4" width="5" height="0.7" fill="#c8ccd6"/><rect x="43" y="50.2" width="2" height="0.9" fill="#8aa0d0"/></svg><rect x="6.7" y="55.1" width="46.3" height="1.2" fill="#1c1c1c"/></svg><div class="lbl" style="left:412px;top:275.5px"><span style="letter-spacing:-0.3px;word-spacing:0.3px">24-Lesson 2-</span><span style="letter-spacing:-0.83px;word-spacing:0.83px">CHANNEL YOUR</span><span style="letter-spacing:-1.56px;word-spacing:1.56px">BEST COFFEE</span><span style="letter-spacing:-1px">TALK</span></div>
<svg class="abs" style="left:492.75px;top:184px" width="64.5" height="86" viewBox="-1 -1 64.5 86"><defs><linearGradient id="pg525_185a" x1="0" y1="0" x2="1" y2="1"><stop offset="0" stop-color="#fbfbfb"/><stop offset="1" stop-color="#f1f2f4"/></linearGradient><linearGradient id="pg525_185b" x1="0" y1="0" x2="1" y2="1"><stop offset="0.5" stop-color="#f7f7f8"/><stop offset="1" stop-color="#c9c9cc"/></linearGradient></defs><path d="M0.5 0H44.5L62.5 18V84H0Z" fill="url(#pg525_185a)"/><path d="M0 83.4H62.5" stroke="#d9d9dc" stroke-width="1.2"/><path d="M44.5 0L62.5 18H45.5Q44.5 18 44.5 17Z" fill="url(#pg525_185b)" stroke="#d2d2d4" stroke-width="0.5"/></svg><svg class="abs" style="left:500.75px;top:205px" width="48" height="47" viewBox="0 0 48 47"><defs><linearGradient id="cl525_214a" x1="0" y1="0" x2="1" y2="1"><stop offset="0" stop-color="#27a5ea"/><stop offset="1" stop-color="#0853b3"/></linearGradient>
<linearGradient id="cl525_214b" x1="0" y1="0" x2="1" y2="0"><stop offset="0" stop-color="#0b5fbd"/><stop offset="0.3" stop-color="#0f78d4"/><stop offset="0.3" stop-color="#1b93e4"/><stop offset="0.55" stop-color="#1b93e4"/><stop offset="0.55" stop-color="#27aef0"/><stop offset="0.8" stop-color="#27aef0"/><stop offset="0.8" stop-color="#48d6fb"/><stop offset="1" stop-color="#48d6fb"/></linearGradient>
<linearGradient id="cl525_214c" x1="0" y1="0" x2="1" y2="0"><stop offset="0" stop-color="#ffffff"/><stop offset="1" stop-color="#d6d6d8"/></linearGradient></defs><clipPath id="cl525_214k"><path d="M3 6.2L45 2Q46.5 1.8 46.6 3.2L46.9 7.4Q47 8.8 45.6 9L7 13.2Z"/></clipPath><g clip-path="url(#cl525_214k)"><rect x="0" y="0" width="48" height="15" fill="#0b5fbe"/><path d="M17.4 14L20 0H30L27.2 14Z" fill="#1385dc"/><path d="M27.2 14L30 0H39L36.2 14Z" fill="#25a7ee"/><path d="M36.2 14L39 0H48V14Z" fill="#47d3fb"/></g><rect x="1.6" y="12.8" width="45.1" height="32.4" rx="1.6" fill="url(#cl525_214a)"/><path d="M1.6 7.4Q1.6 5.7 3.2 5.5L9 5 6.4 18Q5.8 20.6 3.6 20.6 1.6 20.6 1.6 18.4Z" fill="#0a5ab8"/><path d="M18.3 19.8Q18.3 18.5 19.4 19.2L33.2 28Q34.1 28.6 33.2 29.2L19.4 38.5Q18.3 39.2 18.3 37.9Z" fill="url(#cl525_214c)"/></svg><div class="lbl" style="left:525px;top:275.5px"><span style="letter-spacing:-0.3px;word-spacing:0.3px">23-Lesson 1-</span><span style="letter-spacing:-1px;word-spacing:1px">STEP INTO YOUR</span><span style="letter-spacing:-0.93px;word-spacing:0.93px">HIGH-VIBE SELF</span></div>
<svg class="abs" style="left:605.75px;top:184px" width="64.5" height="86" viewBox="-1 -1 64.5 86"><defs><linearGradient id="pg638_185a" x1="0" y1="0" x2="1" y2="1"><stop offset="0" stop-color="#fbfbfb"/><stop offset="1" stop-color="#f1f2f4"/></linearGradient><linearGradient id="pg638_185b" x1="0" y1="0" x2="1" y2="1"><stop offset="0.5" stop-color="#f7f7f8"/><stop offset="1" stop-color="#c9c9cc"/></linearGradient></defs><path d="M0.5 0H44.5L62.5 18V84H0Z" fill="url(#pg638_185a)"/><path d="M0 83.4H62.5" stroke="#d9d9dc" stroke-width="1.2"/><path d="M44.5 0L62.5 18H45.5Q44.5 18 44.5 17Z" fill="url(#pg638_185b)" stroke="#d2d2d4" stroke-width="0.5"/></svg><svg class="abs" style="left:613.75px;top:205px" width="48" height="47" viewBox="0 0 48 47"><defs><linearGradient id="cl638_214a" x1="0" y1="0" x2="1" y2="1"><stop offset="0" stop-color="#27a5ea"/><stop offset="1" stop-color="#0853b3"/></linearGradient>
<linearGradient id="cl638_214b" x1="0" y1="0" x2="1" y2="0"><stop offset="0" stop-color="#0b5fbd"/><stop offset="0.3" stop-color="#0f78d4"/><stop offset="0.3" stop-color="#1b93e4"/><stop offset="0.55" stop-color="#1b93e4"/><stop offset="0.55" stop-color="#27aef0"/><stop offset="0.8" stop-color="#27aef0"/><stop offset="0.8" stop-color="#48d6fb"/><stop offset="1" stop-color="#48d6fb"/></linearGradient>
<linearGradient id="cl638_214c" x1="0" y1="0" x2="1" y2="0"><stop offset="0" stop-color="#ffffff"/><stop offset="1" stop-color="#d6d6d8"/></linearGradient></defs><clipPath id="cl638_214k"><path d="M3 6.2L45 2Q46.5 1.8 46.6 3.2L46.9 7.4Q47 8.8 45.6 9L7 13.2Z"/></clipPath><g clip-path="url(#cl638_214k)"><rect x="0" y="0" width="48" height="15" fill="#0b5fbe"/><path d="M17.4 14L20 0H30L27.2 14Z" fill="#1385dc"/><path d="M27.2 14L30 0H39L36.2 14Z" fill="#25a7ee"/><path d="M36.2 14L39 0H48V14Z" fill="#47d3fb"/></g><rect x="1.6" y="12.8" width="45.1" height="32.4" rx="1.6" fill="url(#cl638_214a)"/><path d="M1.6 7.4Q1.6 5.7 3.2 5.5L9 5 6.4 18Q5.8 20.6 3.6 20.6 1.6 20.6 1.6 18.4Z" fill="#0a5ab8"/><path d="M18.3 19.8Q18.3 18.5 19.4 19.2L33.2 28Q34.1 28.6 33.2 29.2L19.4 38.5Q18.3 39.2 18.3 37.9Z" fill="url(#cl638_214c)"/></svg><div class="lbl" style="left:638px;top:275.5px"><span style="letter-spacing:0.08px;word-spacing:-0.08px">22-Module 5-</span><span style="letter-spacing:-0.6px">INTRODUCTION</span></div>
<svg class="abs" style="left:721px;top:214px" width="60" height="61" viewBox="0 0 60 61"><rect x="0" y="0" width="59.2" height="60.3" fill="#3b3b3b"/><rect x="0" y="0" width="59.2" height="1.2" fill="#4b4b4b"/><rect x="5.5" y="1.6" width="48.5" height="1.2" fill="#555"/><rect x="6.5" y="57" width="46.5" height="1.6" fill="#5a5a5a"/><rect x="5.2" y="2.5" width="1.3" height="54" fill="#2c2c2c"/><rect x="53" y="2.5" width="1.3" height="54" fill="#2c2c2c"/><rect x="0.9" y="5" width="4" height="4.1" fill="#fbfbfb"/><rect x="54.6" y="5" width="3.8" height="4.1" fill="#fbfbfb"/><rect x="0.9" y="14.05" width="4" height="4.1" fill="#fbfbfb"/><rect x="54.6" y="14.05" width="3.8" height="4.1" fill="#fbfbfb"/><rect x="0.9" y="23.1" width="4" height="4.1" fill="#fbfbfb"/><rect x="54.6" y="23.1" width="3.8" height="4.1" fill="#fbfbfb"/><rect x="0.9" y="32.15" width="4" height="4.1" fill="#fbfbfb"/><rect x="54.6" y="32.15" width="3.8" height="4.1" fill="#fbfbfb"/><rect x="0.9" y="41.2" width="4" height="4.1" fill="#fbfbfb"/><rect x="54.6" y="41.2" width="3.8" height="4.1" fill="#fbfbfb"/><rect x="0.9" y="50.25" width="4" height="4.1" fill="#fbfbfb"/><rect x="54.6" y="50.25" width="3.8" height="4.1" fill="#fbfbfb"/><svg x="6.7" y="2.9" width="46.3" height="52.2" viewBox="0 0 46.3 52.2" preserveAspectRatio="none"><rect width="46.3" height="52.2" fill="#fff"/><rect width="46.3" height="25.7" fill="#222b3c"/><text x="0.2" y="12.2" font-family="'Liberation Sans',sans-serif" font-size="8.2" fill="#a8966c" fill-opacity="0.1" stroke="#9c8a62" stroke-width="0.33" textLength="22.4" lengthAdjust="spacingAndGlyphs">MODULE 4</text><text x="0.3" y="16.9" font-family="'Liberation Sans',sans-serif" font-size="4.8" fill="#ffffff" textLength="27.2" lengthAdjust="spacingAndGlyphs">CRAFT YOUR OFFERS</text><text x="0.3" y="22.7" font-family="'Liberation Sans',sans-serif" font-size="4.8" fill="#ffffff" textLength="35.2" lengthAdjust="spacingAndGlyphs">AND VALUE YOUR PRICING</text><text x="44.4" y="36.9" text-anchor="end" font-family="'Liberation Sans',sans-serif" font-size="7.6" fill="#eadcb8" fill-opacity="0.3" stroke="#e6d6ae" stroke-width="0.42" textLength="18" lengthAdjust="spacingAndGlyphs">LESSON</text><text x="45.8" y="43.4" text-anchor="end" font-family="'Liberation Sans',sans-serif" font-size="4.7" fill="#10141c" textLength="28.5" lengthAdjust="spacingAndGlyphs">PRICING YOUR OFFERS</text><rect x="40.4" y="0.5" width="5.4" height="10.2" fill="#c9a860"/><rect x="41.5" y="1.8" width="3.2" height="4.2" fill="#2e2820"/><rect x="40.4" y="6.4" width="5.4" height="4.3" fill="#a9bcdc"/><rect x="42" y="6" width="2.2" height="2.6" fill="#3a3a40"/><rect x="0.8" y="50.4" width="5" height="0.7" fill="#c8ccd6"/><rect x="43" y="50.2" width="2" height="0.9" fill="#8aa0d0"/></svg><rect x="6.7" y="55.1" width="46.3" height="1.2" fill="#1c1c1c"/></svg><div class="lbl" style="left:751px;top:275.5px"><span style="letter-spacing:-0.3px;word-spacing:0.3px">21-Lesson 4-</span><span style="letter-spacing:-0.93px;word-spacing:0.93px">PRICING YOUR</span><span style="letter-spacing:-1.63px">OFFERS</span></div>
<svg class="abs" style="left:43px;top:342px" width="60" height="61" viewBox="0 0 60 61"><rect x="0" y="0" width="59.2" height="60.3" fill="#3b3b3b"/><rect x="0" y="0" width="59.2" height="1.2" fill="#4b4b4b"/><rect x="5.5" y="1.6" width="48.5" height="1.2" fill="#555"/><rect x="6.5" y="57" width="46.5" height="1.6" fill="#5a5a5a"/><rect x="5.2" y="2.5" width="1.3" height="54" fill="#2c2c2c"/><rect x="53" y="2.5" width="1.3" height="54" fill="#2c2c2c"/><rect x="0.9" y="5" width="4" height="4.1" fill="#fbfbfb"/><rect x="54.6" y="5" width="3.8" height="4.1" fill="#fbfbfb"/><rect x="0.9" y="14.05" width="4" height="4.1" fill="#fbfbfb"/><rect x="54.6" y="14.05" width="3.8" height="4.1" fill="#fbfbfb"/><rect x="0.9" y="23.1" width="4" height="4.1" fill="#fbfbfb"/><rect x="54.6" y="23.1" width="3.8" height="4.1" fill="#fbfbfb"/><rect x="0.9" y="32.15" width="4" height="4.1" fill="#fbfbfb"/><rect x="54.6" y="32.15" width="3.8" height="4.1" fill="#fbfbfb"/><rect x="0.9" y="41.2" width="4" height="4.1" fill="#fbfbfb"/><rect x="54.6" y="41.2" width="3.8" height="4.1" fill="#fbfbfb"/><rect x="0.9" y="50.25" width="4" height="4.1" fill="#fbfbfb"/><rect x="54.6" y="50.25" width="3.8" height="4.1" fill="#fbfbfb"/><svg x="6.7" y="2.9" width="46.3" height="52.2" viewBox="0 0 46.3 52.2" preserveAspectRatio="none"><rect width="46.3" height="52.2" fill="#fff"/><rect width="46.3" height="25.7" fill="#222b3c"/><text x="0.2" y="12.2" font-family="'Liberation Sans',sans-serif" font-size="8.2" fill="#a8966c" fill-opacity="0.1" stroke="#9c8a62" stroke-width="0.33" textLength="22.4" lengthAdjust="spacingAndGlyphs">MODULE 4</text><text x="0.3" y="19.9" font-family="'Liberation Sans',sans-serif" font-size="4.8" fill="#ffffff" textLength="64" lengthAdjust="spacingAndGlyphs">CRAFT YOUR OFFERS AND VALUE YOUR PRICING</text><text x="44.4" y="36.9" text-anchor="end" font-family="'Liberation Sans',sans-serif" font-size="7.6" fill="#eadcb8" fill-opacity="0.3" stroke="#e6d6ae" stroke-width="0.42" textLength="18" lengthAdjust="spacingAndGlyphs">LESSON</text><text x="6.4" y="43.4" font-family="'Liberation Sans',sans-serif" font-size="4.7" fill="#10141c" textLength="42" lengthAdjust="spacingAndGlyphs">5 STEPS TO THE PERFECT OFFER</text><rect x="40.4" y="0.5" width="5.4" height="10.2" fill="#c9a860"/><rect x="41.5" y="1.8" width="3.2" height="4.2" fill="#2e2820"/><rect x="40.4" y="6.4" width="5.4" height="4.3" fill="#a9bcdc"/><rect x="42" y="6" width="2.2" height="2.6" fill="#3a3a40"/><rect x="0.8" y="50.4" width="5" height="0.7" fill="#c8ccd6"/><rect x="43" y="50.2" width="2" height="0.9" fill="#8aa0d0"/></svg><rect x="6.7" y="55.1" width="46.3" height="1.2" fill="#1c1c1c"/></svg><div class="lbl" style="left:73px;top:403.5px"><span style="letter-spacing:-0.3px;word-spacing:0.3px">20-Lesson 3- 5</span><span style="letter-spacing:-1.34px;word-spacing:1.34px">STEPS TO THE</span><span style="letter-spacing:-1.55px;word-spacing:1.55px">PERFECT OFFER</span></div>
<svg class="abs" style="left:156px;top:342px" width="60" height="61" viewBox="0 0 60 61"><rect x="0" y="0" width="59.2" height="60.3" fill="#3b3b3b"/><rect x="0" y="0" width="59.2" height="1.2" fill="#4b4b4b"/><rect x="5.5" y="1.6" width="48.5" height="1.2" fill="#555"/><rect x="6.5" y="57" width="46.5" height="1.6" fill="#5a5a5a"/><rect x="5.2" y="2.5" width="1.3" height="54" fill="#2c2c2c"/><rect x="53" y="2.5" width="1.3" height="54" fill="#2c2c2c"/><rect x="0.9" y="5" width="4" height="4.1" fill="#fbfbfb"/><rect x="54.6" y="5" width="3.8" height="4.1" fill="#fbfbfb"/><rect x="0.9" y="14.05" width="4" height="4.1" fill="#fbfbfb"/><rect x="54.6" y="14.05" width="3.8" height="4.1" fill="#fbfbfb"/><rect x="0.9" y="23.1" width="4" height="4.1" fill="#fbfbfb"/><rect x="54.6" y="23.1" width="3.8" height="4.1" fill="#fbfbfb"/><rect x="0.9" y="32.15" width="4" height="4.1" fill="#fbfbfb"/><rect x="54.6" y="32.15" width="3.8" height="4.1" fill="#fbfbfb"/><rect x="0.9" y="41.2" width="4" height="4.1" fill="#fbfbfb"/><rect x="54.6" y="41.2" width="3.8" height="4.1" fill="#fbfbfb"/><rect x="0.9" y="50.25" width="4" height="4.1" fill="#fbfbfb"/><rect x="54.6" y="50.25" width="3.8" height="4.1" fill="#fbfbfb"/><svg x="6.7" y="2.9" width="46.3" height="52.2" viewBox="0 0 46.3 52.2" preserveAspectRatio="none"><rect width="46.3" height="52.2" fill="#222b3c"/><rect x="29.2" y="0" width="17.1" height="52.2" fill="#b6a791"/><g filter="url(#bl)"><rect x="29.2" y="-2" width="5.4" height="56" fill="#a99d8c"/><rect x="35" y="-2" width="12" height="14" fill="#cdbb98"/><path d="M33.6 20Q33 11.5 38.4 11.5 43.4 11.5 43 19L43.6 31 39 35 34 33Z" fill="#cbb58c"/><path d="M33.8 22Q32.4 28 34.6 34L37 33 36 22Z" fill="#e2d2ac"/><ellipse cx="38.6" cy="19.4" rx="2.9" ry="4.4" fill="#c48e6c"/><ellipse cx="38" cy="18.4" rx="1.6" ry="0.7" fill="#5a3a2c" opacity="0.7"/><path d="M40 26Q47 24 47.5 30V55H37L38 42Z" fill="#262d48"/><path d="M37.4 25.6Q40.6 24 42.6 27.4L41 38Q39.4 45 35.4 49L34 46Q36.4 38 36.6 32Z" fill="#c48e6c"/><path d="M34.6 41Q40 39.6 46.5 42V55H33.6Z" fill="#1f2438"/><circle cx="43.6" cy="34" r="0.9" fill="#b09a6a"/><circle cx="41.6" cy="46" r="0.8" fill="#b09a6a"/><circle cx="44.6" cy="40" r="0.7" fill="#8a93b0"/></g><rect x="41.4" y="0.6" width="4.3" height="5" fill="#d2b060"/><rect x="41.4" y="5.6" width="4.3" height="5.4" fill="#8aa0c8"/><rect x="42.6" y="1.8" width="2" height="3.4" fill="#3a3428"/><rect x="42.6" y="6" width="2" height="2.4" fill="#30343c"/><text x="-0.4" y="21.8" font-family="'Liberation Serif',serif" font-size="9.6" fill="#e4e4ec" textLength="6.6" lengthAdjust="spacingAndGlyphs">ell</text><text x="7" y="21.6" font-family="'Liberation Serif',serif" font-size="6.4" font-style="italic" font-weight="bold" fill="#c9aa62" textLength="15" lengthAdjust="spacingAndGlyphs">Your</text><text x="-0.4" y="29.4" font-family="'Liberation Serif',serif" font-size="9" fill="#e4e4ec" textLength="20.4" lengthAdjust="spacingAndGlyphs">rilliance</text><path d="M1 32.6Q10 30.4 19.4 30.8" stroke="#c9aa62" stroke-width="0.7" fill="none"/><text x="7.4" y="36.6" font-family="'Liberation Serif',serif" font-size="3.6" font-style="italic" font-weight="bold" fill="#c9aa62">Club</text><rect x="1" y="39.7" width="22.4" height="1" fill="#9098ac"/><rect x="7.3" y="38.4" width="0.5" height="3.4" fill="#d0d4e0"/><path d="M9.2 13.4L10.2 17 11.4 14.6 12.4 17.4 13.4 15" stroke="#c9aa62" stroke-width="0.55" fill="none"/></svg><rect x="6.7" y="55.1" width="46.3" height="1.2" fill="#1c1c1c"/></svg><div class="lbl" style="left:186px;top:403.5px"><span style="letter-spacing:-0.3px;word-spacing:0.3px">19-Lesson 2-</span><span style="letter-spacing:-1.41px;word-spacing:1.41px">THREE TIER</span><span style="letter-spacing:-1.25px;word-spacing:1.25px">OFFER STACK</span></div>
<svg class="abs" style="left:269px;top:342px" width="60" height="61" viewBox="0 0 60 61"><rect x="0" y="0" width="59.2" height="60.3" fill="#3b3b3b"/><rect x="0" y="0" width="59.2" height="1.2" fill="#4b4b4b"/><rect x="5.5" y="1.6" width="48.5" height="1.2" fill="#555"/><rect x="6.5" y="57" width="46.5" height="1.6" fill="#5a5a5a"/><rect x="5.2" y="2.5" width="1.3" height="54" fill="#2c2c2c"/><rect x="53" y="2.5" width="1.3" height="54" fill="#2c2c2c"/><rect x="0.9" y="5" width="4" height="4.1" fill="#fbfbfb"/><rect x="54.6" y="5" width="3.8" height="4.1" fill="#fbfbfb"/><rect x="0.9" y="14.05" width="4" height="4.1" fill="#fbfbfb"/><rect x="54.6" y="14.05" width="3.8" height="4.1" fill="#fbfbfb"/><rect x="0.9" y="23.1" width="4" height="4.1" fill="#fbfbfb"/><rect x="54.6" y="23.1" width="3.8" height="4.1" fill="#fbfbfb"/><rect x="0.9" y="32.15" width="4" height="4.1" fill="#fbfbfb"/><rect x="54.6" y="32.15" width="3.8" height="4.1" fill="#fbfbfb"/><rect x="0.9" y="41.2" width="4" height="4.1" fill="#fbfbfb"/><rect x="54.6" y="41.2" width="3.8" height="4.1" fill="#fbfbfb"/><rect x="0.9" y="50.25" width="4" height="4.1" fill="#fbfbfb"/><rect x="54.6" y="50.25" width="3.8" height="4.1" fill="#fbfbfb"/><svg x="6.7" y="2.9" width="46.3" height="52.2" viewBox="0 0 46.3 52.2" preserveAspectRatio="none"><rect width="46.3" height="52.2" fill="#fff"/><rect width="46.3" height="25.7" fill="#222b3c"/><text x="0.2" y="12.2" font-family="'Liberation Sans',sans-serif" font-size="8.2" fill="#a8966c" fill-opacity="0.1" stroke="#9c8a62" stroke-width="0.33" textLength="22.4" lengthAdjust="spacingAndGlyphs">MODULE 4</text><text x="0.3" y="16.9" font-family="'Liberation Sans',sans-serif" font-size="4.8" fill="#ffffff" textLength="33.6" lengthAdjust="spacingAndGlyphs">CRAFT YOUR OFFERS AND</text><text x="0.3" y="22.7" font-family="'Liberation Sans',sans-serif" font-size="4.8" fill="#ffffff" textLength="28.8" lengthAdjust="spacingAndGlyphs">VALUE YOUR PRICING</text><text x="44.4" y="36.9" text-anchor="end" font-family="'Liberation Sans',sans-serif" font-size="7.6" fill="#eadcb8" fill-opacity="0.3" stroke="#e6d6ae" stroke-width="0.42" textLength="18" lengthAdjust="spacingAndGlyphs">LESSON</text><text x="45.8" y="43.4" text-anchor="end" font-family="'Liberation Sans',sans-serif" font-size="4.7" fill="#10141c" textLength="30" lengthAdjust="spacingAndGlyphs">CRAFTING YOUR OFFERS</text><rect x="40.4" y="0.5" width="5.4" height="10.2" fill="#c9a860"/><rect x="41.5" y="1.8" width="3.2" height="4.2" fill="#2e2820"/><rect x="40.4" y="6.4" width="5.4" height="4.3" fill="#a9bcdc"/><rect x="42" y="6" width="2.2" height="2.6" fill="#3a3a40"/><rect x="0.8" y="50.4" width="5" height="0.7" fill="#c8ccd6"/><rect x="43" y="50.2" width="2" height="0.9" fill="#8aa0d0"/></svg><rect x="6.7" y="55.1" width="46.3" height="1.2" fill="#1c1c1c"/></svg><div class="lbl" style="left:299px;top:403.5px"><span style="letter-spacing:-0.3px;word-spacing:0.3px">18-Lesson 1-</span><span style="letter-spacing:-0.96px;word-spacing:0.96px">CRAFTING YOUR</span><span style="letter-spacing:-1.63px">OFFERS</span></div>
<svg class="abs" style="left:382px;top:342px" width="60" height="61" viewBox="0 0 60 61"><rect x="0" y="0" width="59.2" height="60.3" fill="#3b3b3b"/><rect x="0" y="0" width="59.2" height="1.2" fill="#4b4b4b"/><rect x="5.5" y="1.6" width="48.5" height="1.2" fill="#555"/><rect x="6.5" y="57" width="46.5" height="1.6" fill="#5a5a5a"/><rect x="5.2" y="2.5" width="1.3" height="54" fill="#2c2c2c"/><rect x="53" y="2.5" width="1.3" height="54" fill="#2c2c2c"/><rect x="0.9" y="5" width="4" height="4.1" fill="#fbfbfb"/><rect x="54.6" y="5" width="3.8" height="4.1" fill="#fbfbfb"/><rect x="0.9" y="14.05" width="4" height="4.1" fill="#fbfbfb"/><rect x="54.6" y="14.05" width="3.8" height="4.1" fill="#fbfbfb"/><rect x="0.9" y="23.1" width="4" height="4.1" fill="#fbfbfb"/><rect x="54.6" y="23.1" width="3.8" height="4.1" fill="#fbfbfb"/><rect x="0.9" y="32.15" width="4" height="4.1" fill="#fbfbfb"/><rect x="54.6" y="32.15" width="3.8" height="4.1" fill="#fbfbfb"/><rect x="0.9" y="41.2" width="4" height="4.1" fill="#fbfbfb"/><rect x="54.6" y="41.2" width="3.8" height="4.1" fill="#fbfbfb"/><rect x="0.9" y="50.25" width="4" height="4.1" fill="#fbfbfb"/><rect x="54.6" y="50.25" width="3.8" height="4.1" fill="#fbfbfb"/><svg x="6.7" y="2.9" width="46.3" height="52.2" viewBox="0 0 46.3 52.2" preserveAspectRatio="none"><g filter="url(#bl)"><rect x="-3" y="-3" width="52" height="58" fill="#7a5530"/><rect x="30.9" y="-3" width="3.2" height="58" fill="#5c3f22"/><rect x="33.9" y="18.5" width="20" height="3.6" fill="#5c3f22"/><rect x="35.4" y="1" width="12" height="16" fill="#8a6338" opacity="0.55"/><rect x="35.4" y="24" width="12" height="13" fill="#8a6338" opacity="0.5"/><rect x="34.4" y="38" width="14" height="16" fill="#5c3f22" opacity="0.5"/><rect x="-3" y="-3" width="23.4" height="58" fill="#e7dfce"/><rect x="17.0" y="-3" width="3.4" height="40" fill="#d8cfbb"/><ellipse cx="10" cy="9.899999999999999" rx="7.5" ry="7" fill="#fbecc0" opacity="0.9"/><ellipse cx="9.5" cy="12.399999999999999" rx="4.5" ry="3.4" fill="#fff2c4" opacity="0.9"/><ellipse cx="9.5" cy="28.4" rx="6.5" ry="7.5" fill="#fbecc0" opacity="0.63"/><rect x="5" y="13.799999999999999" width="8" height="9" fill="#27231e"/><ellipse cx="8.4" cy="19.0" rx="1.1" ry="1.9" fill="#ffe9b0"/><path d="M-3 34Q3 30 8.5 34.5L11 55H-3Z" fill="#a2a6aa"/><path d="M-3 47H9L10 55H-3Z" fill="#e4e0d6"/><path d="M16 23.6Q16.3 6.8 23.8 6.8Q31.3 6.8 31.6 23.6L32.8 42Q23.8 45 14.4 42Z" fill="#45352a"/><path d="M7 55Q7.6 38.5 15 35.5L20.8 31 27.3 31 28 35.5Q35.4 38.5 36 55Z" fill="#2f2833"/><path d="M7 55Q7.6 40.5 12 37.5L14.5 55Z" fill="#241e28"/><path d="M36 55Q35.4 40.5 31 37.5L29 55Z" fill="#241e28"/><path d="M20.2 29.4H27.4L28.4 36.5 24.8 49 20.2 36.5Z" fill="#b5866a"/><path d="M16 22.6L14.4 42 20.2 42.6 18.8 30.4 18.4 22.6Z" fill="#877058"/><path d="M31.6 22.6L32.8 41 27.8 41.6 28.8 30.4 29.2 22.6Z" fill="#877058"/><ellipse cx="23.8" cy="22.6" rx="5.2" ry="9.8" fill="#cf9e82"/><path d="M25.62 14.76Q29.26 22.6 25.36 31.91Q32.12 22.6 25.62 14.76Z" fill="#b5866a" opacity="0.8"/><path d="M18 20.15Q18.2 6.8 23.8 6.8Q29.4 6.8 29.6 20.15Q27.44 13.78 23.8 14.17Q20.16 13.78 18 20.15Z" fill="#45352a"/><ellipse cx="21.46" cy="21.03" rx="1.1" ry="0.7" fill="#3e3230" opacity="0.75"/><ellipse cx="26.14" cy="21.03" rx="1.1" ry="0.7" fill="#3e3230" opacity="0.75"/><ellipse cx="23.9" cy="27.5" rx="1.7" ry="0.9" fill="#9a5452" opacity="0.8"/><ellipse cx="23.8" cy="24.76" rx="0.7" ry="1.6" fill="#b5866a" opacity="0.6"/></g><rect x="41.4" y="50.4" width="3.8" height="0.8" fill="#e0e0e0" opacity="0.6"/></svg><rect x="6.7" y="55.1" width="46.3" height="1.2" fill="#1c1c1c"/></svg><div class="lbl" style="left:412px;top:403.5px"><span style="letter-spacing:0.08px;word-spacing:-0.08px">17-Module 4-</span><span style="letter-spacing:-0.6px">INTRODUCTION</span></div>
<svg class="abs" style="left:495px;top:342px" width="60" height="61" viewBox="0 0 60 61"><rect x="0" y="0" width="59.2" height="60.3" fill="#3b3b3b"/><rect x="0" y="0" width="59.2" height="1.2" fill="#4b4b4b"/><rect x="5.5" y="1.6" width="48.5" height="1.2" fill="#555"/><rect x="6.5" y="57" width="46.5" height="1.6" fill="#5a5a5a"/><rect x="5.2" y="2.5" width="1.3" height="54" fill="#2c2c2c"/><rect x="53" y="2.5" width="1.3" height="54" fill="#2c2c2c"/><rect x="0.9" y="5" width="4" height="4.1" fill="#fbfbfb"/><rect x="54.6" y="5" width="3.8" height="4.1" fill="#fbfbfb"/><rect x="0.9" y="14.05" width="4" height="4.1" fill="#fbfbfb"/><rect x="54.6" y="14.05" width="3.8" height="4.1" fill="#fbfbfb"/><rect x="0.9" y="23.1" width="4" height="4.1" fill="#fbfbfb"/><rect x="54.6" y="23.1" width="3.8" height="4.1" fill="#fbfbfb"/><rect x="0.9" y="32.15" width="4" height="4.1" fill="#fbfbfb"/><rect x="54.6" y="32.15" width="3.8" height="4.1" fill="#fbfbfb"/><rect x="0.9" y="41.2" width="4" height="4.1" fill="#fbfbfb"/><rect x="54.6" y="41.2" width="3.8" height="4.1" fill="#fbfbfb"/><rect x="0.9" y="50.25" width="4" height="4.1" fill="#fbfbfb"/><rect x="54.6" y="50.25" width="3.8" height="4.1" fill="#fbfbfb"/><svg x="6.7" y="2.9" width="46.3" height="52.2" viewBox="0 0 46.3 52.2" preserveAspectRatio="none"><rect width="46.3" height="52.2" fill="#fff"/><rect width="46.3" height="25.7" fill="#222b3c"/><text x="0.2" y="12.2" font-family="'Liberation Sans',sans-serif" font-size="8.2" fill="#a8966c" fill-opacity="0.1" stroke="#9c8a62" stroke-width="0.33" textLength="22.4" lengthAdjust="spacingAndGlyphs">MODULE 3</text><text x="0.3" y="19.9" font-family="'Liberation Sans',sans-serif" font-size="4.8" fill="#ffffff" textLength="44.8" lengthAdjust="spacingAndGlyphs">MAGNETICALLY ATTRACT CLIENTS</text><text x="44.4" y="36.9" text-anchor="end" font-family="'Liberation Sans',sans-serif" font-size="7.6" fill="#eadcb8" fill-opacity="0.3" stroke="#e6d6ae" stroke-width="0.42" textLength="18" lengthAdjust="spacingAndGlyphs">LESSON</text><text x="45.8" y="42.6" text-anchor="end" font-family="'Liberation Sans',sans-serif" font-size="4.7" fill="#10141c" textLength="30" lengthAdjust="spacingAndGlyphs">WORKING THROUGH YOUR</text><text x="45.8" y="47.9" text-anchor="end" font-family="'Liberation Sans',sans-serif" font-size="4.7" fill="#10141c" textLength="30" lengthAdjust="spacingAndGlyphs">OWN SALES OBJECTIONS</text><rect x="40.4" y="0.5" width="5.4" height="10.2" fill="#c9a860"/><rect x="41.5" y="1.8" width="3.2" height="4.2" fill="#2e2820"/><rect x="40.4" y="6.4" width="5.4" height="4.3" fill="#a9bcdc"/><rect x="42" y="6" width="2.2" height="2.6" fill="#3a3a40"/><rect x="0.8" y="50.4" width="5" height="0.7" fill="#c8ccd6"/><rect x="43" y="50.2" width="2" height="0.9" fill="#8aa0d0"/></svg><rect x="6.7" y="55.1" width="46.3" height="1.2" fill="#1c1c1c"/></svg><div class="lbl" style="left:525px;top:403.5px"><span style="letter-spacing:-0.3px;word-spacing:0.3px">16-Lesson 4-</span><span style="letter-spacing:-0.77px">WORKING</span><span style="letter-spacing:-0.89px;word-spacing:0.89px">THROUGH YOUR</span><span style="letter-spacing:-0.89px;word-spacing:0.89px">OWN SALES O...</span></div>
<svg class="abs" style="left:608px;top:342px" width="60" height="61" viewBox="0 0 60 61"><rect x="0" y="0" width="59.2" height="60.3" fill="#3b3b3b"/><rect x="0" y="0" width="59.2" height="1.2" fill="#4b4b4b"/><rect x="5.5" y="1.6" width="48.5" height="1.2" fill="#555"/><rect x="6.5" y="57" width="46.5" height="1.6" fill="#5a5a5a"/><rect x="5.2" y="2.5" width="1.3" height="54" fill="#2c2c2c"/><rect x="53" y="2.5" width="1.3" height="54" fill="#2c2c2c"/><rect x="0.9" y="5" width="4" height="4.1" fill="#fbfbfb"/><rect x="54.6" y="5" width="3.8" height="4.1" fill="#fbfbfb"/><rect x="0.9" y="14.05" width="4" height="4.1" fill="#fbfbfb"/><rect x="54.6" y="14.05" width="3.8" height="4.1" fill="#fbfbfb"/><rect x="0.9" y="23.1" width="4" height="4.1" fill="#fbfbfb"/><rect x="54.6" y="23.1" width="3.8" height="4.1" fill="#fbfbfb"/><rect x="0.9" y="32.15" width="4" height="4.1" fill="#fbfbfb"/><rect x="54.6" y="32.15" width="3.8" height="4.1" fill="#fbfbfb"/><rect x="0.9" y="41.2" width="4" height="4.1" fill="#fbfbfb"/><rect x="54.6" y="41.2" width="3.8" height="4.1" fill="#fbfbfb"/><rect x="0.9" y="50.25" width="4" height="4.1" fill="#fbfbfb"/><rect x="54.6" y="50.25" width="3.8" height="4.1" fill="#fbfbfb"/><svg x="6.7" y="2.9" width="46.3" height="52.2" viewBox="0 0 46.3 52.2" preserveAspectRatio="none"><rect width="46.3" height="52.2" fill="#fff"/><rect width="46.3" height="25.7" fill="#222b3c"/><text x="0.2" y="12.2" font-family="'Liberation Sans',sans-serif" font-size="8.2" fill="#a8966c" fill-opacity="0.1" stroke="#9c8a62" stroke-width="0.33" textLength="22.4" lengthAdjust="spacingAndGlyphs">MODULE 3</text><text x="0.3" y="19.9" font-family="'Liberation Sans',sans-serif" font-size="4.8" fill="#ffffff" textLength="44.8" lengthAdjust="spacingAndGlyphs">MAGNETICALLY ATTRACT CLIENTS</text><text x="44.4" y="36.9" text-anchor="end" font-family="'Liberation Sans',sans-serif" font-size="7.6" fill="#eadcb8" fill-opacity="0.3" stroke="#e6d6ae" stroke-width="0.42" textLength="18" lengthAdjust="spacingAndGlyphs">LESSON</text><text x="45.8" y="42.6" text-anchor="end" font-family="'Liberation Sans',sans-serif" font-size="4.7" fill="#10141c" textLength="30" lengthAdjust="spacingAndGlyphs">CREATING YOUR CLIENT</text><text x="45.8" y="47.9" text-anchor="end" font-family="'Liberation Sans',sans-serif" font-size="4.7" fill="#10141c" textLength="22.5" lengthAdjust="spacingAndGlyphs">ATTRACTION PLAN</text><rect x="40.4" y="0.5" width="5.4" height="10.2" fill="#c9a860"/><rect x="41.5" y="1.8" width="3.2" height="4.2" fill="#2e2820"/><rect x="40.4" y="6.4" width="5.4" height="4.3" fill="#a9bcdc"/><rect x="42" y="6" width="2.2" height="2.6" fill="#3a3a40"/><rect x="0.8" y="50.4" width="5" height="0.7" fill="#c8ccd6"/><rect x="43" y="50.2" width="2" height="0.9" fill="#8aa0d0"/></svg><rect x="6.7" y="55.1" width="46.3" height="1.2" fill="#1c1c1c"/></svg><div class="lbl" style="left:638px;top:403.5px"><span style="letter-spacing:-0.3px;word-spacing:0.3px">15-Lesson 3-</span><span style="letter-spacing:-0.93px;word-spacing:0.93px">CREATING YOUR</span><span style="letter-spacing:-1.09px">CLIENT</span><span style="letter-spacing:-0.75px;word-spacing:0.75px">ATTRACTION G...</span></div>
<svg class="abs" style="left:721px;top:342px" width="60" height="61" viewBox="0 0 60 61"><rect x="0" y="0" width="59.2" height="60.3" fill="#3b3b3b"/><rect x="0" y="0" width="59.2" height="1.2" fill="#4b4b4b"/><rect x="5.5" y="1.6" width="48.5" height="1.2" fill="#555"/><rect x="6.5" y="57" width="46.5" height="1.6" fill="#5a5a5a"/><rect x="5.2" y="2.5" width="1.3" height="54" fill="#2c2c2c"/><rect x="53" y="2.5" width="1.3" height="54" fill="#2c2c2c"/><rect x="0.9" y="5" width="4" height="4.1" fill="#fbfbfb"/><rect x="54.6" y="5" width="3.8" height="4.1" fill="#fbfbfb"/><rect x="0.9" y="14.05" width="4" height="4.1" fill="#fbfbfb"/><rect x="54.6" y="14.05" width="3.8" height="4.1" fill="#fbfbfb"/><rect x="0.9" y="23.1" width="4" height="4.1" fill="#fbfbfb"/><rect x="54.6" y="23.1" width="3.8" height="4.1" fill="#fbfbfb"/><rect x="0.9" y="32.15" width="4" height="4.1" fill="#fbfbfb"/><rect x="54.6" y="32.15" width="3.8" height="4.1" fill="#fbfbfb"/><rect x="0.9" y="41.2" width="4" height="4.1" fill="#fbfbfb"/><rect x="54.6" y="41.2" width="3.8" height="4.1" fill="#fbfbfb"/><rect x="0.9" y="50.25" width="4" height="4.1" fill="#fbfbfb"/><rect x="54.6" y="50.25" width="3.8" height="4.1" fill="#fbfbfb"/><svg x="6.7" y="2.9" width="46.3" height="52.2" viewBox="0 0 46.3 52.2" preserveAspectRatio="none"><rect width="46.3" height="52.2" fill="#fff"/><rect width="46.3" height="25.7" fill="#222b3c"/><text x="0.2" y="12.2" font-family="'Liberation Sans',sans-serif" font-size="8.2" fill="#a8966c" fill-opacity="0.1" stroke="#9c8a62" stroke-width="0.33" textLength="22.4" lengthAdjust="spacingAndGlyphs">MODULE 3</text><text x="0.3" y="19.9" font-family="'Liberation Sans',sans-serif" font-size="4.8" fill="#ffffff" textLength="44.8" lengthAdjust="spacingAndGlyphs">MAGNETICALLY ATTRACT CLIENTS</text><text x="44.4" y="36.9" text-anchor="end" font-family="'Liberation Sans',sans-serif" font-size="7.6" fill="#eadcb8" fill-opacity="0.3" stroke="#e6d6ae" stroke-width="0.42" textLength="18" lengthAdjust="spacingAndGlyphs">LESSON</text><text x="45.8" y="42.6" text-anchor="end" font-family="'Liberation Sans',sans-serif" font-size="4.7" fill="#10141c" textLength="25.5" lengthAdjust="spacingAndGlyphs">CREATE CONTENT TO</text><text x="45.8" y="47.9" text-anchor="end" font-family="'Liberation Sans',sans-serif" font-size="4.7" fill="#10141c" textLength="22.5" lengthAdjust="spacingAndGlyphs">ATTRACT CLIENTS</text><rect x="40.4" y="0.5" width="5.4" height="10.2" fill="#c9a860"/><rect x="41.5" y="1.8" width="3.2" height="4.2" fill="#2e2820"/><rect x="40.4" y="6.4" width="5.4" height="4.3" fill="#a9bcdc"/><rect x="42" y="6" width="2.2" height="2.6" fill="#3a3a40"/><rect x="0.8" y="50.4" width="5" height="0.7" fill="#c8ccd6"/><rect x="43" y="50.2" width="2" height="0.9" fill="#8aa0d0"/></svg><rect x="6.7" y="55.1" width="46.3" height="1.2" fill="#1c1c1c"/></svg><div class="lbl" style="left:751px;top:403.5px"><span style="letter-spacing:-0.3px;word-spacing:0.3px">14-Lesson 2-</span><span style="letter-spacing:-1.42px">CREATE</span><span style="letter-spacing:-0.84px;word-spacing:0.84px">CONTENT TO</span><span style="letter-spacing:-0.95px;word-spacing:0.95px">ATTRACT C...</span></div>
<svg class="abs" style="left:43px;top:470px" width="60" height="61" viewBox="0 0 60 61"><rect x="0" y="0" width="59.2" height="60.3" fill="#3b3b3b"/><rect x="0" y="0" width="59.2" height="1.2" fill="#4b4b4b"/><rect x="5.5" y="1.6" width="48.5" height="1.2" fill="#555"/><rect x="6.5" y="57" width="46.5" height="1.6" fill="#5a5a5a"/><rect x="5.2" y="2.5" width="1.3" height="54" fill="#2c2c2c"/><rect x="53" y="2.5" width="1.3" height="54" fill="#2c2c2c"/><rect x="0.9" y="5" width="4" height="4.1" fill="#fbfbfb"/><rect x="54.6" y="5" width="3.8" height="4.1" fill="#fbfbfb"/><rect x="0.9" y="14.05" width="4" height="4.1" fill="#fbfbfb"/><rect x="54.6" y="14.05" width="3.8" height="4.1" fill="#fbfbfb"/><rect x="0.9" y="23.1" width="4" height="4.1" fill="#fbfbfb"/><rect x="54.6" y="23.1" width="3.8" height="4.1" fill="#fbfbfb"/><rect x="0.9" y="32.15" width="4" height="4.1" fill="#fbfbfb"/><rect x="54.6" y="32.15" width="3.8" height="4.1" fill="#fbfbfb"/><rect x="0.9" y="41.2" width="4" height="4.1" fill="#fbfbfb"/><rect x="54.6" y="41.2" width="3.8" height="4.1" fill="#fbfbfb"/><rect x="0.9" y="50.25" width="4" height="4.1" fill="#fbfbfb"/><rect x="54.6" y="50.25" width="3.8" height="4.1" fill="#fbfbfb"/><svg x="6.7" y="2.9" width="46.3" height="52.2" viewBox="0 0 46.3 52.2" preserveAspectRatio="none"><rect width="46.3" height="52.2" fill="#fff"/><rect width="46.3" height="25.7" fill="#222b3c"/><text x="0.2" y="12.2" font-family="'Liberation Sans',sans-serif" font-size="8.2" fill="#a8966c" fill-opacity="0.1" stroke="#9c8a62" stroke-width="0.33" textLength="22.4" lengthAdjust="spacingAndGlyphs">MODULE 3</text><text x="0.3" y="19.9" font-family="'Liberation Sans',sans-serif" font-size="4.8" fill="#ffffff" textLength="44.8" lengthAdjust="spacingAndGlyphs">MAGNETICALLY ATTRACT CLIENTS</text><text x="44.4" y="36.9" text-anchor="end" font-family="'Liberation Sans',sans-serif" font-size="7.6" fill="#eadcb8" fill-opacity="0.3" stroke="#e6d6ae" stroke-width="0.42" textLength="18" lengthAdjust="spacingAndGlyphs">LESSON</text><text x="6.4" y="43.4" font-family="'Liberation Sans',sans-serif" font-size="4.7" fill="#10141c" textLength="40.5" lengthAdjust="spacingAndGlyphs">CREATING YOUR DREAM CLIENTS</text><rect x="43.4" y="0.6" width="2.4" height="6.5" fill="#9fb0c8"/><rect x="0.8" y="50.4" width="5" height="0.7" fill="#c8ccd6"/><rect x="43" y="50.2" width="2" height="0.9" fill="#8aa0d0"/></svg><rect x="6.7" y="55.1" width="46.3" height="1.2" fill="#1c1c1c"/></svg><div class="lbl" style="left:73px;top:531.5px"><span style="letter-spacing:-0.3px;word-spacing:0.3px">13-Lesson 1-</span><span style="letter-spacing:-0.93px;word-spacing:0.93px">CREATING YOUR</span><span style="letter-spacing:-0.95px;word-spacing:0.95px">DREAM CLIENTS</span></div>
<svg class="abs" style="left:156px;top:470px" width="60" height="61" viewBox="0 0 60 61"><rect x="0" y="0" width="59.2" height="60.3" fill="#3b3b3b"/><rect x="0" y="0" width="59.2" height="1.2" fill="#4b4b4b"/><rect x="5.5" y="1.6" width="48.5" height="1.2" fill="#555"/><rect x="6.5" y="57" width="46.5" height="1.6" fill="#5a5a5a"/><rect x="5.2" y="2.5" width="1.3" height="54" fill="#2c2c2c"/><rect x="53" y="2.5" width="1.3" height="54" fill="#2c2c2c"/><rect x="0.9" y="5" width="4" height="4.1" fill="#fbfbfb"/><rect x="54.6" y="5" width="3.8" height="4.1" fill="#fbfbfb"/><rect x="0.9" y="14.05" width="4" height="4.1" fill="#fbfbfb"/><rect x="54.6" y="14.05" width="3.8" height="4.1" fill="#fbfbfb"/><rect x="0.9" y="23.1" width="4" height="4.1" fill="#fbfbfb"/><rect x="54.6" y="23.1" width="3.8" height="4.1" fill="#fbfbfb"/><rect x="0.9" y="32.15" width="4" height="4.1" fill="#fbfbfb"/><rect x="54.6" y="32.15" width="3.8" height="4.1" fill="#fbfbfb"/><rect x="0.9" y="41.2" width="4" height="4.1" fill="#fbfbfb"/><rect x="54.6" y="41.2" width="3.8" height="4.1" fill="#fbfbfb"/><rect x="0.9" y="50.25" width="4" height="4.1" fill="#fbfbfb"/><rect x="54.6" y="50.25" width="3.8" height="4.1" fill="#fbfbfb"/><svg x="6.7" y="2.9" width="46.3" height="52.2" viewBox="0 0 46.3 52.2" preserveAspectRatio="none"><g filter="url(#bl)"><rect x="-3" y="-3" width="52" height="58" fill="#4b3521"/><rect x="33.2" y="-3" width="3.2" height="58" fill="#382616"/><rect x="36.2" y="18.5" width="20" height="3.6" fill="#382616"/><rect x="37.7" y="1" width="12" height="16" fill="#5a4028" opacity="0.55"/><rect x="37.7" y="24" width="12" height="13" fill="#5a4028" opacity="0.5"/><rect x="36.7" y="38" width="14" height="16" fill="#382616" opacity="0.5"/><rect x="-3" y="-3" width="25.7" height="58" fill="#d9ccb2"/><rect x="19.3" y="-3" width="3.4" height="40" fill="#c9bca2"/><ellipse cx="11.2" cy="11.899999999999999" rx="7.5" ry="7" fill="#f7dd9c" opacity="0.9"/><ellipse cx="10.7" cy="14.399999999999999" rx="4.5" ry="3.4" fill="#fff2c4" opacity="0.9"/><ellipse cx="10.7" cy="30.4" rx="6.5" ry="7.5" fill="#f7dd9c" opacity="0.63"/><rect x="6.199999999999999" y="15.799999999999999" width="8" height="9" fill="#27231e"/><ellipse cx="9.6" cy="21.0" rx="1.1" ry="1.9" fill="#ffe9b0"/><path d="M-3 34Q3 30 8.5 34.5L11 55H-3Z" fill="#8f9295"/><path d="M-3 47H9L10 55H-3Z" fill="#a7a49c"/><path d="M15.7 22.4Q16 7 23.3 7Q30.6 7 30.9 22.4L32.1 41Q23.3 44 14.1 41Z" fill="#75634a"/><path d="M7.6 55Q8.2 37.5 15.6 34.5L20.3 30 26.8 30 30.6 34.5Q38 37.5 38.6 55Z" fill="#e0cecd"/><path d="M7.6 55Q8.2 39.5 12.6 36.5L15.1 55Z" fill="#cdb9b8"/><path d="M38.6 55Q38 39.5 33.6 36.5L31.6 55Z" fill="#cdb9b8"/><path d="M19.7 28H26.9L27.9 35.5 24.3 51 19.7 35.5Z" fill="#bd9076"/><path d="M15.7 21.4L14.1 41 19.9 41.6 18.5 29 18.1 21.4Z" fill="#b7a17b"/><path d="M30.9 21.4L32.1 40 27.1 40.6 28.1 29 28.5 21.4Z" fill="#b7a17b"/><ellipse cx="23.3" cy="21.4" rx="5" ry="9.6" fill="#d6a88e"/><path d="M25.05 13.72Q28.55 21.4 24.8 30.52Q31.3 21.4 25.05 13.72Z" fill="#bd9076" opacity="0.8"/><path d="M17.7 19Q17.9 7 23.3 7Q28.7 7 28.9 19Q26.8 12.76 23.3 13.14Q19.8 12.76 17.7 19Z" fill="#75634a"/><ellipse cx="21.05" cy="19.86" rx="1.1" ry="0.7" fill="#3e3230" opacity="0.75"/><ellipse cx="25.55" cy="19.86" rx="1.1" ry="0.7" fill="#3e3230" opacity="0.75"/><ellipse cx="23.4" cy="26.2" rx="1.7" ry="0.9" fill="#9a5452" opacity="0.8"/><ellipse cx="23.3" cy="23.51" rx="0.7" ry="1.6" fill="#bd9076" opacity="0.6"/></g><rect x="41.4" y="50.4" width="3.8" height="0.8" fill="#e0e0e0" opacity="0.6"/></svg><rect x="6.7" y="55.1" width="46.3" height="1.2" fill="#1c1c1c"/></svg><div class="lbl" style="left:186px;top:531.5px"><span style="letter-spacing:0.08px;word-spacing:-0.08px">12-Module 3-</span><span style="letter-spacing:-0.6px">INTRODUCTION</span></div>
<svg class="abs" style="left:269px;top:470px" width="60" height="61" viewBox="0 0 60 61"><rect x="0" y="0" width="59.2" height="60.3" fill="#3b3b3b"/><rect x="0" y="0" width="59.2" height="1.2" fill="#4b4b4b"/><rect x="5.5" y="1.6" width="48.5" height="1.2" fill="#555"/><rect x="6.5" y="57" width="46.5" height="1.6" fill="#5a5a5a"/><rect x="5.2" y="2.5" width="1.3" height="54" fill="#2c2c2c"/><rect x="53" y="2.5" width="1.3" height="54" fill="#2c2c2c"/><rect x="0.9" y="5" width="4" height="4.1" fill="#fbfbfb"/><rect x="54.6" y="5" width="3.8" height="4.1" fill="#fbfbfb"/><rect x="0.9" y="14.05" width="4" height="4.1" fill="#fbfbfb"/><rect x="54.6" y="14.05" width="3.8" height="4.1" fill="#fbfbfb"/><rect x="0.9" y="23.1" width="4" height="4.1" fill="#fbfbfb"/><rect x="54.6" y="23.1" width="3.8" height="4.1" fill="#fbfbfb"/><rect x="0.9" y="32.15" width="4" height="4.1" fill="#fbfbfb"/><rect x="54.6" y="32.15" width="3.8" height="4.1" fill="#fbfbfb"/><rect x="0.9" y="41.2" width="4" height="4.1" fill="#fbfbfb"/><rect x="54.6" y="41.2" width="3.8" height="4.1" fill="#fbfbfb"/><rect x="0.9" y="50.25" width="4" height="4.1" fill="#fbfbfb"/><rect x="54.6" y="50.25" width="3.8" height="4.1" fill="#fbfbfb"/><svg x="6.7" y="2.9" width="46.3" height="52.2" viewBox="0 0 46.3 52.2" preserveAspectRatio="none"><rect width="46.3" height="52.2" fill="#fff"/><rect width="46.3" height="25.7" fill="#222b3c"/><text x="0.2" y="12.2" font-family="'Liberation Sans',sans-serif" font-size="8.2" fill="#a8966c" fill-opacity="0.1" stroke="#9c8a62" stroke-width="0.33" textLength="22.4" lengthAdjust="spacingAndGlyphs">MODULE 2</text><text x="0.3" y="19.9" font-family="'Liberation Sans',sans-serif" font-size="4.8" fill="#ffffff" textLength="40" lengthAdjust="spacingAndGlyphs">MASTER YOUR MONEY MINDSET</text><text x="44.4" y="36.9" text-anchor="end" font-family="'Liberation Sans',sans-serif" font-size="7.6" fill="#eadcb8" fill-opacity="0.3" stroke="#e6d6ae" stroke-width="0.42" textLength="30" lengthAdjust="spacingAndGlyphs">BONUS LESSON</text><text x="45.8" y="43.4" text-anchor="end" font-family="'Liberation Sans',sans-serif" font-size="4.7" fill="#10141c" textLength="36" lengthAdjust="spacingAndGlyphs">MICRO LIFESTYLE UPGRADES</text><rect x="43.4" y="0.6" width="2.4" height="6.5" fill="#9fb0c8"/><rect x="21" y="1.2" width="5" height="0.9" fill="#8a2a3a" opacity="0.8"/><rect x="0.8" y="50.4" width="5" height="0.7" fill="#c8ccd6"/><rect x="43" y="50.2" width="2" height="0.9" fill="#8aa0d0"/></svg><rect x="6.7" y="55.1" width="46.3" height="1.2" fill="#1c1c1c"/></svg><div class="lbl" style="left:299px;top:531.5px"><span style="letter-spacing:-0.1px">11-Bonus-</span><span style="letter-spacing:-0.77px">MICRO</span><span style="letter-spacing:-1.45px">LIFESTYLE</span><span style="letter-spacing:-1.23px">UPGRADES</span></div>
<svg class="abs" style="left:382px;top:470px" width="60" height="61" viewBox="0 0 60 61"><rect x="0" y="0" width="59.2" height="60.3" fill="#3b3b3b"/><rect x="0" y="0" width="59.2" height="1.2" fill="#4b4b4b"/><rect x="5.5" y="1.6" width="48.5" height="1.2" fill="#555"/><rect x="6.5" y="57" width="46.5" height="1.6" fill="#5a5a5a"/><rect x="5.2" y="2.5" width="1.3" height="54" fill="#2c2c2c"/><rect x="53" y="2.5" width="1.3" height="54" fill="#2c2c2c"/><rect x="0.9" y="5" width="4" height="4.1" fill="#fbfbfb"/><rect x="54.6" y="5" width="3.8" height="4.1" fill="#fbfbfb"/><rect x="0.9" y="14.05" width="4" height="4.1" fill="#fbfbfb"/><rect x="54.6" y="14.05" width="3.8" height="4.1" fill="#fbfbfb"/><rect x="0.9" y="23.1" width="4" height="4.1" fill="#fbfbfb"/><rect x="54.6" y="23.1" width="3.8" height="4.1" fill="#fbfbfb"/><rect x="0.9" y="32.15" width="4" height="4.1" fill="#fbfbfb"/><rect x="54.6" y="32.15" width="3.8" height="4.1" fill="#fbfbfb"/><rect x="0.9" y="41.2" width="4" height="4.1" fill="#fbfbfb"/><rect x="54.6" y="41.2" width="3.8" height="4.1" fill="#fbfbfb"/><rect x="0.9" y="50.25" width="4" height="4.1" fill="#fbfbfb"/><rect x="54.6" y="50.25" width="3.8" height="4.1" fill="#fbfbfb"/><svg x="6.7" y="2.9" width="46.3" height="52.2" viewBox="0 0 46.3 52.2" preserveAspectRatio="none"><rect width="46.3" height="52.2" fill="#fff"/><rect width="46.3" height="25.7" fill="#222b3c"/><text x="0.2" y="12.2" font-family="'Liberation Sans',sans-serif" font-size="8.2" fill="#a8966c" fill-opacity="0.1" stroke="#9c8a62" stroke-width="0.33" textLength="22.4" lengthAdjust="spacingAndGlyphs">MODULE 2</text><text x="0.3" y="19.9" font-family="'Liberation Sans',sans-serif" font-size="4.8" fill="#ffffff" textLength="40" lengthAdjust="spacingAndGlyphs">MASTER YOUR MONEY MINDSET</text><text x="44.4" y="36.9" text-anchor="end" font-family="'Liberation Sans',sans-serif" font-size="7.6" fill="#eadcb8" fill-opacity="0.3" stroke="#e6d6ae" stroke-width="0.42" textLength="18" lengthAdjust="spacingAndGlyphs">LESSON</text><text x="6.4" y="43.4" font-family="'Liberation Sans',sans-serif" font-size="4.7" fill="#10141c" textLength="42" lengthAdjust="spacingAndGlyphs">FORGIVING YOUR MONEY BELIEFS</text><rect x="43.4" y="0.6" width="2.4" height="6.5" fill="#9fb0c8"/><rect x="21" y="1.2" width="5" height="0.9" fill="#8a2a3a" opacity="0.8"/><rect x="0.8" y="50.4" width="5" height="0.7" fill="#c8ccd6"/><rect x="43" y="50.2" width="2" height="0.9" fill="#8aa0d0"/></svg><rect x="6.7" y="55.1" width="46.3" height="1.2" fill="#1c1c1c"/></svg><div class="lbl" style="left:412px;top:531.5px"><span style="letter-spacing:-0.3px;word-spacing:0.3px">10-Lesson 3-</span><span style="letter-spacing:-0.83px">FORGIVING</span><span style="letter-spacing:-0.85px;word-spacing:0.85px">YOUR MONEY</span><span style="letter-spacing:-1.54px">BELIEFS</span></div>
<svg class="abs" style="left:495px;top:470px" width="60" height="61" viewBox="0 0 60 61"><rect x="0" y="0" width="59.2" height="60.3" fill="#3b3b3b"/><rect x="0" y="0" width="59.2" height="1.2" fill="#4b4b4b"/><rect x="5.5" y="1.6" width="48.5" height="1.2" fill="#555"/><rect x="6.5" y="57" width="46.5" height="1.6" fill="#5a5a5a"/><rect x="5.2" y="2.5" width="1.3" height="54" fill="#2c2c2c"/><rect x="53" y="2.5" width="1.3" height="54" fill="#2c2c2c"/><rect x="0.9" y="5" width="4" height="4.1" fill="#fbfbfb"/><rect x="54.6" y="5" width="3.8" height="4.1" fill="#fbfbfb"/><rect x="0.9" y="14.05" width="4" height="4.1" fill="#fbfbfb"/><rect x="54.6" y="14.05" width="3.8" height="4.1" fill="#fbfbfb"/><rect x="0.9" y="23.1" width="4" height="4.1" fill="#fbfbfb"/><rect x="54.6" y="23.1" width="3.8" height="4.1" fill="#fbfbfb"/><rect x="0.9" y="32.15" width="4" height="4.1" fill="#fbfbfb"/><rect x="54.6" y="32.15" width="3.8" height="4.1" fill="#fbfbfb"/><rect x="0.9" y="41.2" width="4" height="4.1" fill="#fbfbfb"/><rect x="54.6" y="41.2" width="3.8" height="4.1" fill="#fbfbfb"/><rect x="0.9" y="50.25" width="4" height="4.1" fill="#fbfbfb"/><rect x="54.6" y="50.25" width="3.8" height="4.1" fill="#fbfbfb"/><svg x="6.7" y="2.9" width="46.3" height="52.2" viewBox="0 0 46.3 52.2" preserveAspectRatio="none"><rect width="46.3" height="52.2" fill="#fff"/><rect width="46.3" height="25.7" fill="#222b3c"/><text x="0.2" y="12.2" font-family="'Liberation Sans',sans-serif" font-size="8.2" fill="#a8966c" fill-opacity="0.1" stroke="#9c8a62" stroke-width="0.33" textLength="22.4" lengthAdjust="spacingAndGlyphs">MODULE 2</text><text x="0.3" y="19.9" font-family="'Liberation Sans',sans-serif" font-size="4.8" fill="#ffffff" textLength="40" lengthAdjust="spacingAndGlyphs">MASTER YOUR MONEY MINDSET</text><text x="44.4" y="36.9" text-anchor="end" font-family="'Liberation Sans',sans-serif" font-size="7.6" fill="#eadcb8" fill-opacity="0.3" stroke="#e6d6ae" stroke-width="0.42" textLength="18" lengthAdjust="spacingAndGlyphs">LESSON</text><text x="45.8" y="43.4" text-anchor="end" font-family="'Liberation Sans',sans-serif" font-size="4.7" fill="#10141c" textLength="36" lengthAdjust="spacingAndGlyphs">TAMING YOUR MONEY BLOCKS</text><rect x="21" y="1.2" width="5" height="0.9" fill="#8a2a3a" opacity="0.8"/><rect x="0.8" y="50.4" width="5" height="0.7" fill="#c8ccd6"/><rect x="43" y="50.2" width="2" height="0.9" fill="#8aa0d0"/></svg><rect x="6.7" y="55.1" width="46.3" height="1.2" fill="#1c1c1c"/></svg><div class="lbl" style="left:525px;top:531.5px"><span style="letter-spacing:-0.31px;word-spacing:0.31px">9-Lesson 2-</span><span style="letter-spacing:-0.57px;word-spacing:0.57px">TAMING YOUR</span><span style="letter-spacing:-0.95px;word-spacing:0.95px">MONEY BLOCKS</span></div>
<svg class="abs" style="left:608px;top:470px" width="60" height="61" viewBox="0 0 60 61"><rect x="0" y="0" width="59.2" height="60.3" fill="#3b3b3b"/><rect x="0" y="0" width="59.2" height="1.2" fill="#4b4b4b"/><rect x="5.5" y="1.6" width="48.5" height="1.2" fill="#555"/><rect x="6.5" y="57" width="46.5" height="1.6" fill="#5a5a5a"/><rect x="5.2" y="2.5" width="1.3" height="54" fill="#2c2c2c"/><rect x="53" y="2.5" width="1.3" height="54" fill="#2c2c2c"/><rect x="0.9" y="5" width="4" height="4.1" fill="#fbfbfb"/><rect x="54.6" y="5" width="3.8" height="4.1" fill="#fbfbfb"/><rect x="0.9" y="14.05" width="4" height="4.1" fill="#fbfbfb"/><rect x="54.6" y="14.05" width="3.8" height="4.1" fill="#fbfbfb"/><rect x="0.9" y="23.1" width="4" height="4.1" fill="#fbfbfb"/><rect x="54.6" y="23.1" width="3.8" height="4.1" fill="#fbfbfb"/><rect x="0.9" y="32.15" width="4" height="4.1" fill="#fbfbfb"/><rect x="54.6" y="32.15" width="3.8" height="4.1" fill="#fbfbfb"/><rect x="0.9" y="41.2" width="4" height="4.1" fill="#fbfbfb"/><rect x="54.6" y="41.2" width="3.8" height="4.1" fill="#fbfbfb"/><rect x="0.9" y="50.25" width="4" height="4.1" fill="#fbfbfb"/><rect x="54.6" y="50.25" width="3.8" height="4.1" fill="#fbfbfb"/><svg x="6.7" y="2.9" width="46.3" height="52.2" viewBox="0 0 46.3 52.2" preserveAspectRatio="none"><g filter="url(#bl)"><rect x="-3" y="-3" width="52" height="58" fill="#6a4b2a"/><rect x="35.5" y="-3" width="3.2" height="58" fill="#54391e"/><rect x="38.5" y="18.5" width="20" height="3.6" fill="#54391e"/><rect x="40" y="1" width="12" height="16" fill="#7a5832" opacity="0.55"/><rect x="40" y="24" width="12" height="13" fill="#7a5832" opacity="0.5"/><rect x="39" y="38" width="14" height="16" fill="#54391e" opacity="0.5"/><rect x="-3" y="-3" width="28" height="58" fill="#b4ad9f"/><rect x="21.6" y="-3" width="3.4" height="40" fill="#a89f8e"/><ellipse cx="11.4" cy="13.899999999999999" rx="7.5" ry="7" fill="#d8c08a" opacity="0.45"/><ellipse cx="10.9" cy="16.4" rx="4.5" ry="3.4" fill="#fff2c4" opacity="0.45"/><ellipse cx="10.9" cy="32.4" rx="6.5" ry="7.5" fill="#d8c08a" opacity="0.315"/><rect x="6.4" y="17.799999999999997" width="8" height="9" fill="#27231e"/><ellipse cx="9.8" cy="23.0" rx="1.1" ry="1.9" fill="#ffe9b0"/><path d="M-3 34Q3 30 8.5 34.5L11 55H-3Z" fill="#8b96a6"/><path d="M-3 47H9L10 55H-3Z" fill="#9aa2ac"/><rect x="-1" y="22.6" width="3.4" height="9.4" fill="#26241f"/><rect x="-0.4" y="24" width="1.8" height="6.4" fill="#b08a4e"/><path d="M13.6 23.5Q13.9 5.6 21.8 5.6Q29.7 5.6 30 23.5L31.2 46Q21.8 49 12 46Z" fill="#7b6549"/><path d="M4.6 55Q5.2 40 12.6 37L18.8 32.5 25.3 32.5 30.4 37Q37.8 40 38.4 55Z" fill="#2b2d9c"/><path d="M4.6 55Q5.2 42 9.6 39L12.1 55Z" fill="#232480"/><path d="M38.4 55Q37.8 42 33.4 39L31.4 55Z" fill="#232480"/><path d="M18.2 30.5H25.4L26.4 38 22.8 53 18.2 38Z" fill="#b8846e"/><path d="M13.6 22.5L12 46 17.8 46.6 16.4 31.5 16 22.5Z" fill="#c3ab82"/><path d="M30 22.5L31.2 45 26.2 45.6 27.2 31.5 27.6 22.5Z" fill="#c3ab82"/><ellipse cx="21.8" cy="22.5" rx="5.6" ry="11" fill="#cf9c86"/><path d="M23.76 13.7Q27.68 22.5 23.48 32.95Q30.76 22.5 23.76 13.7Z" fill="#b8846e" opacity="0.8"/><path d="M15.6 19.75Q15.8 5.6 21.8 5.6Q27.8 5.6 28 19.75Q25.72 12.6 21.8 13.04Q17.88 12.6 15.6 19.75Z" fill="#7b6549"/><ellipse cx="19.28" cy="20.74" rx="1.1" ry="0.7" fill="#3e3230" opacity="0.75"/><ellipse cx="24.32" cy="20.74" rx="1.1" ry="0.7" fill="#3e3230" opacity="0.75"/><ellipse cx="21.9" cy="28" rx="1.7" ry="0.9" fill="#b06a70" opacity="0.8"/><ellipse cx="21.8" cy="24.92" rx="0.7" ry="1.6" fill="#b8846e" opacity="0.6"/></g><rect x="41.4" y="50.4" width="3.8" height="0.8" fill="#e0e0e0" opacity="0.6"/></svg><rect x="6.7" y="55.1" width="46.3" height="1.2" fill="#1c1c1c"/></svg><div class="lbl" style="left:638px;top:531.5px"><span style="letter-spacing:-0.31px;word-spacing:0.31px">8-Lesson 1-</span><span style="letter-spacing:-0.78px;word-spacing:0.78px">NAME YOUR</span><span style="letter-spacing:-0.95px;word-spacing:0.95px">MONEY BLOCKS</span></div>
<svg class="abs" style="left:721px;top:470px" width="60" height="61" viewBox="0 0 60 61"><rect x="0" y="0" width="59.2" height="60.3" fill="#3b3b3b"/><rect x="0" y="0" width="59.2" height="1.2" fill="#4b4b4b"/><rect x="5.5" y="1.6" width="48.5" height="1.2" fill="#555"/><rect x="6.5" y="57" width="46.5" height="1.6" fill="#5a5a5a"/><rect x="5.2" y="2.5" width="1.3" height="54" fill="#2c2c2c"/><rect x="53" y="2.5" width="1.3" height="54" fill="#2c2c2c"/><rect x="0.9" y="5" width="4" height="4.1" fill="#fbfbfb"/><rect x="54.6" y="5" width="3.8" height="4.1" fill="#fbfbfb"/><rect x="0.9" y="14.05" width="4" height="4.1" fill="#fbfbfb"/><rect x="54.6" y="14.05" width="3.8" height="4.1" fill="#fbfbfb"/><rect x="0.9" y="23.1" width="4" height="4.1" fill="#fbfbfb"/><rect x="54.6" y="23.1" width="3.8" height="4.1" fill="#fbfbfb"/><rect x="0.9" y="32.15" width="4" height="4.1" fill="#fbfbfb"/><rect x="54.6" y="32.15" width="3.8" height="4.1" fill="#fbfbfb"/><rect x="0.9" y="41.2" width="4" height="4.1" fill="#fbfbfb"/><rect x="54.6" y="41.2" width="3.8" height="4.1" fill="#fbfbfb"/><rect x="0.9" y="50.25" width="4" height="4.1" fill="#fbfbfb"/><rect x="54.6" y="50.25" width="3.8" height="4.1" fill="#fbfbfb"/><svg x="6.7" y="2.9" width="46.3" height="52.2" viewBox="0 0 46.3 52.2" preserveAspectRatio="none"><g filter="url(#bl)"><rect x="-3" y="-3" width="52" height="58" fill="#6e4e2b"/><rect x="37.5" y="-3" width="3.2" height="58" fill="#563b20"/><rect x="40.5" y="18.5" width="20" height="3.6" fill="#563b20"/><rect x="42" y="1" width="12" height="16" fill="#7e5b34" opacity="0.55"/><rect x="42" y="24" width="12" height="13" fill="#7e5b34" opacity="0.5"/><rect x="41" y="38" width="14" height="16" fill="#563b20" opacity="0.5"/><rect x="-3" y="-3" width="30" height="58" fill="#c5bdac"/><rect x="23.6" y="-3" width="3.4" height="40" fill="#b5ab98"/><ellipse cx="11.4" cy="13.899999999999999" rx="7.5" ry="7" fill="#d8c08a" opacity="0.35"/><ellipse cx="10.9" cy="16.4" rx="4.5" ry="3.4" fill="#fff2c4" opacity="0.35"/><ellipse cx="10.9" cy="32.4" rx="6.5" ry="7.5" fill="#d8c08a" opacity="0.24499999999999997"/><rect x="6.4" y="17.799999999999997" width="8" height="9" fill="#27231e"/><ellipse cx="9.8" cy="23.0" rx="1.1" ry="1.9" fill="#ffe9b0"/><path d="M-3 34Q3 30 8.5 34.5L11 55H-3Z" fill="#e8e8e8"/><path d="M-3 47H9L10 55H-3Z" fill="#d0d0d0"/><rect x="-1" y="22.6" width="3.4" height="9.4" fill="#26241f"/><rect x="-0.4" y="24" width="1.8" height="6.4" fill="#b08a4e"/><path d="M15.2 23Q15.5 3.8 23.8 3.8Q32.1 3.8 32.4 23L33.6 47Q23.8 50 13.6 47Z" fill="#806a4c"/><path d="M6 55Q6.6 40 14 37L20.8 32.5 27.3 32.5 32.4 37Q39.8 40 40.4 55Z" fill="#2b2d9c"/><path d="M6 55Q6.6 42 11 39L13.5 55Z" fill="#232480"/><path d="M40.4 55Q39.8 42 35.4 39L33.4 55Z" fill="#232480"/><path d="M20.2 30H27.4L28.4 38 24.8 53 20.2 38Z" fill="#b98a72"/><path d="M15.2 22L13.6 47 19.4 47.6 18 31 17.6 22Z" fill="#c6ae84"/><path d="M32.4 22L33.6 46 28.6 46.6 29.6 31 30 22Z" fill="#c6ae84"/><ellipse cx="23.8" cy="22" rx="6" ry="11" fill="#d0a088"/><path d="M25.9 13.2Q30.1 22 25.6 32.45Q33.4 22 25.9 13.2Z" fill="#b98a72" opacity="0.8"/><path d="M17.2 19.25Q17.4 3.8 23.8 3.8Q30.2 3.8 30.4 19.25Q28 12.1 23.8 12.54Q19.6 12.1 17.2 19.25Z" fill="#806a4c"/><ellipse cx="21.1" cy="20.24" rx="1.1" ry="0.7" fill="#3e3230" opacity="0.75"/><ellipse cx="26.5" cy="20.24" rx="1.1" ry="0.7" fill="#3e3230" opacity="0.75"/><ellipse cx="23.9" cy="27.5" rx="1.7" ry="0.9" fill="#b06a70" opacity="0.8"/><ellipse cx="23.8" cy="24.42" rx="0.7" ry="1.6" fill="#b98a72" opacity="0.6"/></g><rect x="41.4" y="50.4" width="3.8" height="0.8" fill="#e0e0e0" opacity="0.6"/></svg><rect x="6.7" y="55.1" width="46.3" height="1.2" fill="#1c1c1c"/></svg><div class="lbl" style="left:751px;top:531.5px"><span style="letter-spacing:0.11px;word-spacing:-0.11px">7-Module 2-</span><span style="letter-spacing:-0.6px">INTRODUCTION</span></div>
<svg class="abs" style="left:43px;top:632px" width="60" height="61" viewBox="0 0 60 61"><rect x="0" y="0" width="59.2" height="60.3" fill="#3b3b3b"/><rect x="0" y="0" width="59.2" height="1.2" fill="#4b4b4b"/><rect x="5.5" y="1.6" width="48.5" height="1.2" fill="#555"/><rect x="6.5" y="57" width="46.5" height="1.6" fill="#5a5a5a"/><rect x="5.2" y="2.5" width="1.3" height="54" fill="#2c2c2c"/><rect x="53" y="2.5" width="1.3" height="54" fill="#2c2c2c"/><rect x="0.9" y="5" width="4" height="4.1" fill="#fbfbfb"/><rect x="54.6" y="5" width="3.8" height="4.1" fill="#fbfbfb"/><rect x="0.9" y="14.05" width="4" height="4.1" fill="#fbfbfb"/><rect x="54.6" y="14.05" width="3.8" height="4.1" fill="#fbfbfb"/><rect x="0.9" y="23.1" width="4" height="4.1" fill="#fbfbfb"/><rect x="54.6" y="23.1" width="3.8" height="4.1" fill="#fbfbfb"/><rect x="0.9" y="32.15" width="4" height="4.1" fill="#fbfbfb"/><rect x="54.6" y="32.15" width="3.8" height="4.1" fill="#fbfbfb"/><rect x="0.9" y="41.2" width="4" height="4.1" fill="#fbfbfb"/><rect x="54.6" y="41.2" width="3.8" height="4.1" fill="#fbfbfb"/><rect x="0.9" y="50.25" width="4" height="4.1" fill="#fbfbfb"/><rect x="54.6" y="50.25" width="3.8" height="4.1" fill="#fbfbfb"/><svg x="6.7" y="2.9" width="46.3" height="52.2" viewBox="0 0 46.3 52.2" preserveAspectRatio="none"><rect width="46.3" height="52.2" fill="#fff"/><rect width="46.3" height="25.7" fill="#222b3c"/><text x="0.2" y="12.2" font-family="'Liberation Sans',sans-serif" font-size="8.2" fill="#a8966c" fill-opacity="0.1" stroke="#9c8a62" stroke-width="0.33" textLength="22.4" lengthAdjust="spacingAndGlyphs">MODULE 1</text><text x="0.3" y="19.9" font-family="'Liberation Sans',sans-serif" font-size="4.8" fill="#ffffff" textLength="44.8" lengthAdjust="spacingAndGlyphs">REMEMBER YOUR HIGH-VIBE SELF</text><text x="44.4" y="36.9" text-anchor="end" font-family="'Liberation Sans',sans-serif" font-size="7.6" fill="#eadcb8" fill-opacity="0.3" stroke="#e6d6ae" stroke-width="0.42" textLength="18" lengthAdjust="spacingAndGlyphs">LESSON</text><text x="6.4" y="43.4" font-family="'Liberation Sans',sans-serif" font-size="4.7" fill="#10141c" textLength="49.5" lengthAdjust="spacingAndGlyphs">QUESTIONING YOUR LIMITING BELIEFS</text><rect x="44.2" y="0.6" width="1.9" height="8" fill="#c8d4e4"/><rect x="21" y="1.2" width="5" height="0.9" fill="#8a2a3a" opacity="0.8"/><rect x="0.8" y="50.4" width="5" height="0.7" fill="#c8ccd6"/><rect x="43" y="50.2" width="2" height="0.9" fill="#8aa0d0"/></svg><rect x="6.7" y="55.1" width="46.3" height="1.2" fill="#1c1c1c"/></svg><div class="lbl" style="left:73px;top:693.5px"><span style="letter-spacing:-0.31px;word-spacing:0.31px">6-Lesson 4-</span><span style="letter-spacing:-0.72px">QUESTIONING</span><span style="letter-spacing:-0.63px;word-spacing:0.63px">YOUR LIMITING</span><span style="letter-spacing:-1.54px">BELIEFS</span></div>
<svg class="abs" style="left:156px;top:632px" width="60" height="61" viewBox="0 0 60 61"><rect x="0" y="0" width="59.2" height="60.3" fill="#3b3b3b"/><rect x="0" y="0" width="59.2" height="1.2" fill="#4b4b4b"/><rect x="5.5" y="1.6" width="48.5" height="1.2" fill="#555"/><rect x="6.5" y="57" width="46.5" height="1.6" fill="#5a5a5a"/><rect x="5.2" y="2.5" width="1.3" height="54" fill="#2c2c2c"/><rect x="53" y="2.5" width="1.3" height="54" fill="#2c2c2c"/><rect x="0.9" y="5" width="4" height="4.1" fill="#fbfbfb"/><rect x="54.6" y="5" width="3.8" height="4.1" fill="#fbfbfb"/><rect x="0.9" y="14.05" width="4" height="4.1" fill="#fbfbfb"/><rect x="54.6" y="14.05" width="3.8" height="4.1" fill="#fbfbfb"/><rect x="0.9" y="23.1" width="4" height="4.1" fill="#fbfbfb"/><rect x="54.6" y="23.1" width="3.8" height="4.1" fill="#fbfbfb"/><rect x="0.9" y="32.15" width="4" height="4.1" fill="#fbfbfb"/><rect x="54.6" y="32.15" width="3.8" height="4.1" fill="#fbfbfb"/><rect x="0.9" y="41.2" width="4" height="4.1" fill="#fbfbfb"/><rect x="54.6" y="41.2" width="3.8" height="4.1" fill="#fbfbfb"/><rect x="0.9" y="50.25" width="4" height="4.1" fill="#fbfbfb"/><rect x="54.6" y="50.25" width="3.8" height="4.1" fill="#fbfbfb"/><svg x="6.7" y="2.9" width="46.3" height="52.2" viewBox="0 0 46.3 52.2" preserveAspectRatio="none"><rect width="46.3" height="52.2" fill="#fff"/><rect width="46.3" height="25.7" fill="#222b3c"/><text x="0.2" y="12.2" font-family="'Liberation Sans',sans-serif" font-size="8.2" fill="#a8966c" fill-opacity="0.1" stroke="#9c8a62" stroke-width="0.33" textLength="22.4" lengthAdjust="spacingAndGlyphs">MODULE 1</text><text x="0.3" y="19.9" font-family="'Liberation Sans',sans-serif" font-size="4.8" fill="#ffffff" textLength="44.8" lengthAdjust="spacingAndGlyphs">REMEMBER YOUR HIGH-VIBE SELF</text><text x="44.4" y="36.9" text-anchor="end" font-family="'Liberation Sans',sans-serif" font-size="7.6" fill="#eadcb8" fill-opacity="0.3" stroke="#e6d6ae" stroke-width="0.42" textLength="18" lengthAdjust="spacingAndGlyphs">LESSON</text><text x="45.8" y="42.6" text-anchor="end" font-family="'Liberation Sans',sans-serif" font-size="4.7" fill="#10141c" textLength="25.5" lengthAdjust="spacingAndGlyphs">BECOMING AWARE OF</text><text x="45.8" y="47.9" text-anchor="end" font-family="'Liberation Sans',sans-serif" font-size="4.7" fill="#10141c" textLength="31.5" lengthAdjust="spacingAndGlyphs">YOUR LIMITING BELIEFS</text><rect x="44.2" y="0.6" width="1.9" height="8" fill="#c8d4e4"/><rect x="21" y="1.2" width="5" height="0.9" fill="#8a2a3a" opacity="0.8"/><rect x="0.8" y="50.4" width="5" height="0.7" fill="#c8ccd6"/><rect x="43" y="50.2" width="2" height="0.9" fill="#8aa0d0"/></svg><rect x="6.7" y="55.1" width="46.3" height="1.2" fill="#1c1c1c"/></svg><div class="lbl" style="left:186px;top:693.5px"><span style="letter-spacing:-0.31px;word-spacing:0.31px">5-Lesson 3-</span><span style="letter-spacing:-0.78px">BECOMING</span><span style="letter-spacing:-0.92px;word-spacing:0.92px">AWARE OF YOUR</span><span style="letter-spacing:-0.89px;word-spacing:0.89px">LIMITING BELIEFS</span></div>
<svg class="abs" style="left:266.75px;top:602px" width="64.5" height="86" viewBox="-1 -1 64.5 86"><defs><linearGradient id="pg299_603a" x1="0" y1="0" x2="1" y2="1"><stop offset="0" stop-color="#fbfbfb"/><stop offset="1" stop-color="#f1f2f4"/></linearGradient><linearGradient id="pg299_603b" x1="0" y1="0" x2="1" y2="1"><stop offset="0.5" stop-color="#f7f7f8"/><stop offset="1" stop-color="#c9c9cc"/></linearGradient></defs><path d="M0.5 0H44.5L62.5 18V84H0Z" fill="url(#pg299_603a)"/><path d="M0 83.4H62.5" stroke="#d9d9dc" stroke-width="1.2"/><path d="M44.5 0L62.5 18H45.5Q44.5 18 44.5 17Z" fill="url(#pg299_603b)" stroke="#d2d2d4" stroke-width="0.5"/></svg><svg class="abs" style="left:274.75px;top:623px" width="48" height="47" viewBox="0 0 48 47"><defs><linearGradient id="cl299_632a" x1="0" y1="0" x2="1" y2="1"><stop offset="0" stop-color="#27a5ea"/><stop offset="1" stop-color="#0853b3"/></linearGradient>
<linearGradient id="cl299_632b" x1="0" y1="0" x2="1" y2="0"><stop offset="0" stop-color="#0b5fbd"/><stop offset="0.3" stop-color="#0f78d4"/><stop offset="0.3" stop-color="#1b93e4"/><stop offset="0.55" stop-color="#1b93e4"/><stop offset="0.55" stop-color="#27aef0"/><stop offset="0.8" stop-color="#27aef0"/><stop offset="0.8" stop-color="#48d6fb"/><stop offset="1" stop-color="#48d6fb"/></linearGradient>
<linearGradient id="cl299_632c" x1="0" y1="0" x2="1" y2="0"><stop offset="0" stop-color="#ffffff"/><stop offset="1" stop-color="#d6d6d8"/></linearGradient></defs><clipPath id="cl299_632k"><path d="M3 6.2L45 2Q46.5 1.8 46.6 3.2L46.9 7.4Q47 8.8 45.6 9L7 13.2Z"/></clipPath><g clip-path="url(#cl299_632k)"><rect x="0" y="0" width="48" height="15" fill="#0b5fbe"/><path d="M17.4 14L20 0H30L27.2 14Z" fill="#1385dc"/><path d="M27.2 14L30 0H39L36.2 14Z" fill="#25a7ee"/><path d="M36.2 14L39 0H48V14Z" fill="#47d3fb"/></g><rect x="1.6" y="12.8" width="45.1" height="32.4" rx="1.6" fill="url(#cl299_632a)"/><path d="M1.6 7.4Q1.6 5.7 3.2 5.5L9 5 6.4 18Q5.8 20.6 3.6 20.6 1.6 20.6 1.6 18.4Z" fill="#0a5ab8"/><path d="M18.3 19.8Q18.3 18.5 19.4 19.2L33.2 28Q34.1 28.6 33.2 29.2L19.4 38.5Q18.3 39.2 18.3 37.9Z" fill="url(#cl299_632c)"/></svg><div class="lbl" style="left:299px;top:693.5px"><span style="letter-spacing:-0.31px;word-spacing:0.31px">4-Lesson 2-</span><span style="letter-spacing:-0.58px;word-spacing:0.58px">TAPPING INTO</span><span style="letter-spacing:-0.75px;word-spacing:0.75px">YOUR VISION</span></div>
<svg class="abs" style="left:379.75px;top:602px" width="64.5" height="86" viewBox="-1 -1 64.5 86"><defs><linearGradient id="pg412_603a" x1="0" y1="0" x2="1" y2="1"><stop offset="0" stop-color="#fbfbfb"/><stop offset="1" stop-color="#f1f2f4"/></linearGradient><linearGradient id="pg412_603b" x1="0" y1="0" x2="1" y2="1"><stop offset="0.5" stop-color="#f7f7f8"/><stop offset="1" stop-color="#c9c9cc"/></linearGradient></defs><path d="M0.5 0H44.5L62.5 18V84H0Z" fill="url(#pg412_603a)"/><path d="M0 83.4H62.5" stroke="#d9d9dc" stroke-width="1.2"/><path d="M44.5 0L62.5 18H45.5Q44.5 18 44.5 17Z" fill="url(#pg412_603b)" stroke="#d2d2d4" stroke-width="0.5"/></svg><svg class="abs" style="left:387.75px;top:623px" width="48" height="47" viewBox="0 0 48 47"><defs><linearGradient id="cl412_632a" x1="0" y1="0" x2="1" y2="1"><stop offset="0" stop-color="#27a5ea"/><stop offset="1" stop-color="#0853b3"/></linearGradient>
<linearGradient id="cl412_632b" x1="0" y1="0" x2="1" y2="0"><stop offset="0" stop-color="#0b5fbd"/><stop offset="0.3" stop-color="#0f78d4"/><stop offset="0.3" stop-color="#1b93e4"/><stop offset="0.55" stop-color="#1b93e4"/><stop offset="0.55" stop-color="#27aef0"/><stop offset="0.8" stop-color="#27aef0"/><stop offset="0.8" stop-color="#48d6fb"/><stop offset="1" stop-color="#48d6fb"/></linearGradient>
<linearGradient id="cl412_632c" x1="0" y1="0" x2="1" y2="0"><stop offset="0" stop-color="#ffffff"/><stop offset="1" stop-color="#d6d6d8"/></linearGradient></defs><clipPath id="cl412_632k"><path d="M3 6.2L45 2Q46.5 1.8 46.6 3.2L46.9 7.4Q47 8.8 45.6 9L7 13.2Z"/></clipPath><g clip-path="url(#cl412_632k)"><rect x="0" y="0" width="48" height="15" fill="#0b5fbe"/><path d="M17.4 14L20 0H30L27.2 14Z" fill="#1385dc"/><path d="M27.2 14L30 0H39L36.2 14Z" fill="#25a7ee"/><path d="M36.2 14L39 0H48V14Z" fill="#47d3fb"/></g><rect x="1.6" y="12.8" width="45.1" height="32.4" rx="1.6" fill="url(#cl412_632a)"/><path d="M1.6 7.4Q1.6 5.7 3.2 5.5L9 5 6.4 18Q5.8 20.6 3.6 20.6 1.6 20.6 1.6 18.4Z" fill="#0a5ab8"/><path d="M18.3 19.8Q18.3 18.5 19.4 19.2L33.2 28Q34.1 28.6 33.2 29.2L19.4 38.5Q18.3 39.2 18.3 37.9Z" fill="url(#cl412_632c)"/></svg><div class="lbl" style="left:412px;top:693.5px"><span style="letter-spacing:-0.31px;word-spacing:0.31px">3-Lesson 1-</span><span style="letter-spacing:-0.75px">CONNECTING</span><span style="letter-spacing:-0.82px;word-spacing:0.82px">WITH YOUR</span><span style="letter-spacing:-0.96px">BRILLIANCE</span></div>
<svg class="abs" style="left:492.75px;top:602px" width="64.5" height="86" viewBox="-1 -1 64.5 86"><defs><linearGradient id="pg525_603a" x1="0" y1="0" x2="1" y2="1"><stop offset="0" stop-color="#fbfbfb"/><stop offset="1" stop-color="#f1f2f4"/></linearGradient><linearGradient id="pg525_603b" x1="0" y1="0" x2="1" y2="1"><stop offset="0.5" stop-color="#f7f7f8"/><stop offset="1" stop-color="#c9c9cc"/></linearGradient></defs><path d="M0.5 0H44.5L62.5 18V84H0Z" fill="url(#pg525_603a)"/><path d="M0 83.4H62.5" stroke="#d9d9dc" stroke-width="1.2"/><path d="M44.5 0L62.5 18H45.5Q44.5 18 44.5 17Z" fill="url(#pg525_603b)" stroke="#d2d2d4" stroke-width="0.5"/></svg><svg class="abs" style="left:500.75px;top:623px" width="48" height="47" viewBox="0 0 48 47"><defs><linearGradient id="cl525_632a" x1="0" y1="0" x2="1" y2="1"><stop offset="0" stop-color="#27a5ea"/><stop offset="1" stop-color="#0853b3"/></linearGradient>
<linearGradient id="cl525_632b" x1="0" y1="0" x2="1" y2="0"><stop offset="0" stop-color="#0b5fbd"/><stop offset="0.3" stop-color="#0f78d4"/><stop offset="0.3" stop-color="#1b93e4"/><stop offset="0.55" stop-color="#1b93e4"/><stop offset="0.55" stop-color="#27aef0"/><stop offset="0.8" stop-color="#27aef0"/><stop offset="0.8" stop-color="#48d6fb"/><stop offset="1" stop-color="#48d6fb"/></linearGradient>
<linearGradient id="cl525_632c" x1="0" y1="0" x2="1" y2="0"><stop offset="0" stop-color="#ffffff"/><stop offset="1" stop-color="#d6d6d8"/></linearGradient></defs><clipPath id="cl525_632k"><path d="M3 6.2L45 2Q46.5 1.8 46.6 3.2L46.9 7.4Q47 8.8 45.6 9L7 13.2Z"/></clipPath><g clip-path="url(#cl525_632k)"><rect x="0" y="0" width="48" height="15" fill="#0b5fbe"/><path d="M17.4 14L20 0H30L27.2 14Z" fill="#1385dc"/><path d="M27.2 14L30 0H39L36.2 14Z" fill="#25a7ee"/><path d="M36.2 14L39 0H48V14Z" fill="#47d3fb"/></g><rect x="1.6" y="12.8" width="45.1" height="32.4" rx="1.6" fill="url(#cl525_632a)"/><path d="M1.6 7.4Q1.6 5.7 3.2 5.5L9 5 6.4 18Q5.8 20.6 3.6 20.6 1.6 20.6 1.6 18.4Z" fill="#0a5ab8"/><path d="M18.3 19.8Q18.3 18.5 19.4 19.2L33.2 28Q34.1 28.6 33.2 29.2L19.4 38.5Q18.3 39.2 18.3 37.9Z" fill="url(#cl525_632c)"/></svg><div class="lbl" style="left:525px;top:693.5px"><span style="letter-spacing:0.11px;word-spacing:-0.11px">2-Module 1-</span><span style="letter-spacing:-0.6px">INTRODUCTION</span></div>
<svg class="abs" style="left:605.75px;top:602px" width="64.5" height="86" viewBox="-1 -1 64.5 86"><defs><linearGradient id="pg638_603a" x1="0" y1="0" x2="1" y2="1"><stop offset="0" stop-color="#fbfbfb"/><stop offset="1" stop-color="#f1f2f4"/></linearGradient><linearGradient id="pg638_603b" x1="0" y1="0" x2="1" y2="1"><stop offset="0.5" stop-color="#f7f7f8"/><stop offset="1" stop-color="#c9c9cc"/></linearGradient></defs><path d="M0.5 0H44.5L62.5 18V84H0Z" fill="url(#pg638_603a)"/><path d="M0 83.4H62.5" stroke="#d9d9dc" stroke-width="1.2"/><path d="M44.5 0L62.5 18H45.5Q44.5 18 44.5 17Z" fill="url(#pg638_603b)" stroke="#d2d2d4" stroke-width="0.5"/></svg><svg class="abs" style="left:613.75px;top:623px" width="48" height="47" viewBox="0 0 48 47"><defs><linearGradient id="cl638_632a" x1="0" y1="0" x2="1" y2="1"><stop offset="0" stop-color="#27a5ea"/><stop offset="1" stop-color="#0853b3"/></linearGradient>
<linearGradient id="cl638_632b" x1="0" y1="0" x2="1" y2="0"><stop offset="0" stop-color="#0b5fbd"/><stop offset="0.3" stop-color="#0f78d4"/><stop offset="0.3" stop-color="#1b93e4"/><stop offset="0.55" stop-color="#1b93e4"/><stop offset="0.55" stop-color="#27aef0"/><stop offset="0.8" stop-color="#27aef0"/><stop offset="0.8" stop-color="#48d6fb"/><stop offset="1" stop-color="#48d6fb"/></linearGradient>
<linearGradient id="cl638_632c" x1="0" y1="0" x2="1" y2="0"><stop offset="0" stop-color="#ffffff"/><stop offset="1" stop-color="#d6d6d8"/></linearGradient></defs><clipPath id="cl638_632k"><path d="M3 6.2L45 2Q46.5 1.8 46.6 3.2L46.9 7.4Q47 8.8 45.6 9L7 13.2Z"/></clipPath><g clip-path="url(#cl638_632k)"><rect x="0" y="0" width="48" height="15" fill="#0b5fbe"/><path d="M17.4 14L20 0H30L27.2 14Z" fill="#1385dc"/><path d="M27.2 14L30 0H39L36.2 14Z" fill="#25a7ee"/><path d="M36.2 14L39 0H48V14Z" fill="#47d3fb"/></g><rect x="1.6" y="12.8" width="45.1" height="32.4" rx="1.6" fill="url(#cl638_632a)"/><path d="M1.6 7.4Q1.6 5.7 3.2 5.5L9 5 6.4 18Q5.8 20.6 3.6 20.6 1.6 20.6 1.6 18.4Z" fill="#0a5ab8"/><path d="M18.3 19.8Q18.3 18.5 19.4 19.2L33.2 28Q34.1 28.6 33.2 29.2L19.4 38.5Q18.3 39.2 18.3 37.9Z" fill="url(#cl638_632c)"/></svg><div class="lbl" style="left:638px;top:693.5px"><span style="letter-spacing:-0.01px;word-spacing:0.01px">1-Welcome to</span><span style="letter-spacing:-0.34px;word-spacing:0.34px">Sell Your</span><span style="letter-spacing:-0.28px">Brilliance</span></div>
<svg class="abs" style="left:718.75px;top:602px" width="64.5" height="86" viewBox="-1 -1 64.5 86"><defs><linearGradient id="pg751_603a" x1="0" y1="0" x2="1" y2="1"><stop offset="0" stop-color="#fbfbfb"/><stop offset="1" stop-color="#f1f2f4"/></linearGradient><linearGradient id="pg751_603b" x1="0" y1="0" x2="1" y2="1"><stop offset="0.5" stop-color="#f7f7f8"/><stop offset="1" stop-color="#c9c9cc"/></linearGradient></defs><path d="M0.5 0H44.5L62.5 18V84H0Z" fill="url(#pg751_603a)"/><path d="M0 83.4H62.5" stroke="#d9d9dc" stroke-width="1.2"/><path d="M44.5 0L62.5 18H45.5Q44.5 18 44.5 17Z" fill="url(#pg751_603b)" stroke="#d2d2d4" stroke-width="0.5"/></svg><svg class="abs" style="left:727px;top:621.9px" width="48" height="48" viewBox="-24 -24 48 48"><defs><linearGradient id="aua" x1="0.15" y1="0.1" x2="0.85" y2="0.9"><stop offset="0" stop-color="#ff9a3c"/><stop offset="0.45" stop-color="#e0706a"/><stop offset="1" stop-color="#9a55d8"/></linearGradient>
<linearGradient id="aub" x1="0" y1="0" x2="1" y2="1"><stop offset="0" stop-color="#454545"/><stop offset="1" stop-color="#1e1e1e"/></linearGradient>
<linearGradient id="auc" x1="0" y1="0" x2="1" y2="0"><stop offset="0" stop-color="#ffffff"/><stop offset="1" stop-color="#d0d0d2"/></linearGradient></defs><circle r="22.3" fill="url(#aua)"/><circle r="18.8" fill="url(#aub)"/><path d="M-5.9 -9.3Q-5.9 -10.7 -4.7 -10L9.7 -0.7Q10.6 0 9.7 0.7L-4.7 10Q-5.9 10.7 -5.9 9.3Z" fill="url(#auc)"/></svg><div class="lbl" style="left:751px;top:693.5px"><span style="letter-spacing:-0.19px">Meditation_-_Cal</span><span style="letter-spacing:-0.3px">ling_the_money_i</span><span style="letter-spacing:-1.39px">n</span></div>
<svg class="abs" style="left:40.75px;top:764px" width="64.5" height="22" viewBox="-1 -1 64.5 22"><defs><linearGradient id="pg73_765a" x1="0" y1="0" x2="1" y2="1"><stop offset="0" stop-color="#fbfbfb"/><stop offset="1" stop-color="#f1f2f4"/></linearGradient><linearGradient id="pg73_765b" x1="0" y1="0" x2="1" y2="1"><stop offset="0.5" stop-color="#f7f7f8"/><stop offset="1" stop-color="#c9c9cc"/></linearGradient></defs><path d="M0.5 0H44.5L62.5 18V84H0Z" fill="url(#pg73_765a)"/><path d="M0 83.4H62.5" stroke="#d9d9dc" stroke-width="1.2"/><path d="M44.5 0L62.5 18H45.5Q44.5 18 44.5 17Z" fill="url(#pg73_765b)" stroke="#d2d2d4" stroke-width="0.5"/></svg><svg class="abs" style="left:152px;top:762.5px" width="68" height="30" viewBox="0 0 68 30"><defs><linearGradient id="bf186a" x1="0" y1="0" x2="1" y2="0"><stop offset="0" stop-color="#f3f3f4"/><stop offset="0.5" stop-color="#fafafa"/><stop offset="0.92" stop-color="#e6e6e8"/><stop offset="1" stop-color="#cfcfd2"/></linearGradient><linearGradient id="bf186b" x1="0" y1="1" x2="1" y2="0"><stop offset="0" stop-color="#dedee0"/><stop offset="0.5" stop-color="#f6f6f7"/></linearGradient></defs><path d="M0 2Q0 0 2 0H41.5V30H0Z" fill="url(#bf186a)"/><path d="M41.5 0Q43 0 44 1L68 25.5V30H41.5Z" fill="url(#bf186b)"/></svg><svg class="abs" style="left:265px;top:762.5px" width="68" height="30" viewBox="0 0 68 30"><defs><linearGradient id="bf299a" x1="0" y1="0" x2="1" y2="0"><stop offset="0" stop-color="#f3f3f4"/><stop offset="0.5" stop-color="#fafafa"/><stop offset="0.92" stop-color="#e6e6e8"/><stop offset="1" stop-color="#cfcfd2"/></linearGradient><linearGradient id="bf299b" x1="0" y1="1" x2="1" y2="0"><stop offset="0" stop-color="#dedee0"/><stop offset="0.5" stop-color="#f6f6f7"/></linearGradient></defs><path d="M0 2Q0 0 2 0H41.5V30H0Z" fill="url(#bf299a)"/><path d="M41.5 0Q43 0 44 1L68 25.5V30H41.5Z" fill="url(#bf299b)"/></svg><svg class="abs" style="left:378px;top:762.5px" width="68" height="30" viewBox="0 0 68 30"><defs><linearGradient id="bf412a" x1="0" y1="0" x2="1" y2="0"><stop offset="0" stop-color="#f3f3f4"/><stop offset="0.5" stop-color="#fafafa"/><stop offset="0.92" stop-color="#e6e6e8"/><stop offset="1" stop-color="#cfcfd2"/></linearGradient><linearGradient id="bf412b" x1="0" y1="1" x2="1" y2="0"><stop offset="0" stop-color="#dedee0"/><stop offset="0.5" stop-color="#f6f6f7"/></linearGradient></defs><path d="M0 2Q0 0 2 0H41.5V30H0Z" fill="url(#bf412a)"/><path d="M41.5 0Q43 0 44 1L68 25.5V30H41.5Z" fill="url(#bf412b)"/></svg><svg class="abs" style="left:491px;top:762.5px" width="68" height="30" viewBox="0 0 68 30"><defs><linearGradient id="bf525a" x1="0" y1="0" x2="1" y2="0"><stop offset="0" stop-color="#f3f3f4"/><stop offset="0.5" stop-color="#fafafa"/><stop offset="0.92" stop-color="#e6e6e8"/><stop offset="1" stop-color="#cfcfd2"/></linearGradient><linearGradient id="bf525b" x1="0" y1="1" x2="1" y2="0"><stop offset="0" stop-color="#dedee0"/><stop offset="0.5" stop-color="#f6f6f7"/></linearGradient></defs><path d="M0 2Q0 0 2 0H41.5V30H0Z" fill="url(#bf525a)"/><path d="M41.5 0Q43 0 44 1L68 25.5V30H41.5Z" fill="url(#bf525b)"/></svg><svg class="abs" style="left:604px;top:762.5px" width="68" height="30" viewBox="0 0 68 30"><defs><linearGradient id="bf638a" x1="0" y1="0" x2="1" y2="0"><stop offset="0" stop-color="#f3f3f4"/><stop offset="0.5" stop-color="#fafafa"/><stop offset="0.92" stop-color="#e6e6e8"/><stop offset="1" stop-color="#cfcfd2"/></linearGradient><linearGradient id="bf638b" x1="0" y1="1" x2="1" y2="0"><stop offset="0" stop-color="#dedee0"/><stop offset="0.5" stop-color="#f6f6f7"/></linearGradient></defs><path d="M0 2Q0 0 2 0H41.5V30H0Z" fill="url(#bf638a)"/><path d="M41.5 0Q43 0 44 1L68 25.5V30H41.5Z" fill="url(#bf638b)"/></svg><svg class="abs" style="left:717px;top:762.5px" width="68" height="30" viewBox="0 0 68 30"><defs><linearGradient id="bf751a" x1="0" y1="0" x2="1" y2="0"><stop offset="0" stop-color="#f3f3f4"/><stop offset="0.5" stop-color="#fafafa"/><stop offset="0.92" stop-color="#e6e6e8"/><stop offset="1" stop-color="#cfcfd2"/></linearGradient><linearGradient id="bf751b" x1="0" y1="1" x2="1" y2="0"><stop offset="0" stop-color="#dedee0"/><stop offset="0.5" stop-color="#f6f6f7"/></linearGradient></defs><path d="M0 2Q0 0 2 0H41.5V30H0Z" fill="url(#bf751a)"/><path d="M41.5 0Q43 0 44 1L68 25.5V30H41.5Z" fill="url(#bf751b)"/></svg>
<div class="tip"><span style="letter-spacing:-0.67px;word-spacing:0.67px">16-Lesson 4- WORKING THROUGH YOUR OWN SALES OBJECTIO...</span><span style="letter-spacing:-0.21px;word-spacing:0.21px">Item type: MP4 File</span><span style="letter-spacing:-0.58px;word-spacing:0.58px">Size: 65.7 MB</span><span style="letter-spacing:-0.34px;word-spacing:0.34px">Length: 00:10:45</span></div></div></body></html>
